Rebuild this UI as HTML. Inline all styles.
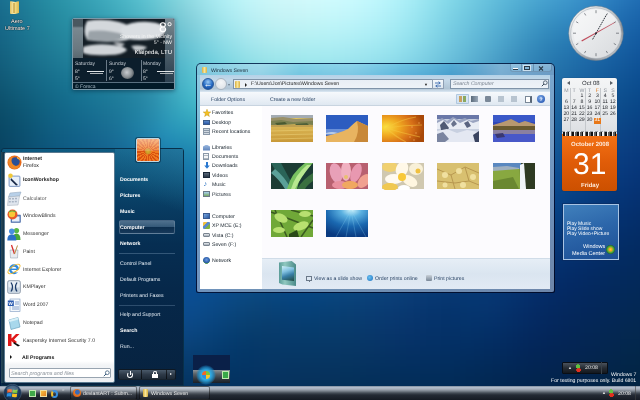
<!DOCTYPE html>
<html><head><meta charset="utf-8">
<style>
*{margin:0;padding:0;box-sizing:border-box}
html,body{width:640px;height:400px;overflow:hidden}
body{text-rendering:geometricPrecision;position:relative;font-family:"Liberation Sans",sans-serif;font-size:6px;background:#0a3a70}
.a{position:absolute}
.t,.sl,.sr,.nv{margin-top:1px}
.t{position:absolute;white-space:nowrap;line-height:1}
.nv{position:absolute;left:212px;color:#15202a;font-size:5.2px;white-space:nowrap;line-height:1}
.ni{position:absolute;left:203px;width:7px;height:6px}
.th{position:absolute;width:42px;height:27px}
.sl{position:absolute;left:23px;color:#1a1a1a;font-size:5.2px;white-space:nowrap;line-height:1}
.si{position:absolute;left:7px;width:14px;height:14px}
.sr{position:absolute;left:120px;color:#fff;font-size:5.2px;white-space:nowrap;line-height:1}
</style></head><body>
<svg class="abs" style="left:0;top:0" width="640" height="400" viewBox="0 0 640 400"><defs><filter id="bgb" x="-10%" y="-10%" width="120%" height="120%" color-interpolation-filters="sRGB"><feGaussianBlur stdDeviation="10"/></filter></defs><g filter="url(#bgb)"><rect x="-40" y="-40" width="20" height="20" fill="#1a6c8e"/><rect x="-20" y="-40" width="20" height="20" fill="#1e7595"/><rect x="0" y="-40" width="20" height="20" fill="#227f9d"/><rect x="20" y="-40" width="20" height="20" fill="#288ba5"/><rect x="40" y="-40" width="20" height="20" fill="#2f97ae"/><rect x="60" y="-40" width="20" height="20" fill="#38a3b7"/><rect x="80" y="-40" width="20" height="20" fill="#42aec0"/><rect x="100" y="-40" width="20" height="20" fill="#4fbaca"/><rect x="120" y="-40" width="20" height="20" fill="#5ec7d5"/><rect x="140" y="-40" width="20" height="20" fill="#70d3de"/><rect x="160" y="-40" width="20" height="20" fill="#85dde6"/><rect x="180" y="-40" width="20" height="20" fill="#9be8ee"/><rect x="200" y="-40" width="20" height="20" fill="#aef1f6"/><rect x="220" y="-40" width="20" height="20" fill="#bef8fb"/><rect x="240" y="-40" width="20" height="20" fill="#cbfcfe"/><rect x="260" y="-40" width="20" height="20" fill="#d4feff"/><rect x="280" y="-40" width="20" height="20" fill="#d9ffff"/><rect x="300" y="-40" width="20" height="20" fill="#dbffff"/><rect x="320" y="-40" width="20" height="20" fill="#d9ffff"/><rect x="340" y="-40" width="20" height="20" fill="#d4ffff"/><rect x="360" y="-40" width="20" height="20" fill="#cbfdff"/><rect x="380" y="-40" width="20" height="20" fill="#c0f9ff"/><rect x="400" y="-40" width="20" height="20" fill="#b1f3fb"/><rect x="420" y="-40" width="20" height="20" fill="#a0ebf6"/><rect x="440" y="-40" width="20" height="20" fill="#8fe1f0"/><rect x="460" y="-40" width="20" height="20" fill="#80d7ea"/><rect x="480" y="-40" width="20" height="20" fill="#72cce6"/><rect x="500" y="-40" width="20" height="20" fill="#66c2e1"/><rect x="520" y="-40" width="20" height="20" fill="#5cb8de"/><rect x="540" y="-40" width="20" height="20" fill="#52aeda"/><rect x="560" y="-40" width="20" height="20" fill="#4aa4d7"/><rect x="580" y="-40" width="20" height="20" fill="#4199d2"/><rect x="600" y="-40" width="20" height="20" fill="#388dcb"/><rect x="620" y="-40" width="20" height="20" fill="#3081c4"/><rect x="640" y="-40" width="20" height="20" fill="#2977be"/><rect x="660" y="-40" width="20" height="20" fill="#236fb8"/><rect x="-40" y="-20" width="20" height="20" fill="#166487"/><rect x="-20" y="-20" width="20" height="20" fill="#196d8f"/><rect x="0" y="-20" width="20" height="20" fill="#1d7896"/><rect x="20" y="-20" width="20" height="20" fill="#22849e"/><rect x="40" y="-20" width="20" height="20" fill="#2991a6"/><rect x="60" y="-20" width="20" height="20" fill="#319baf"/><rect x="80" y="-20" width="20" height="20" fill="#3aa6b9"/><rect x="100" y="-20" width="20" height="20" fill="#45b1c3"/><rect x="120" y="-20" width="20" height="20" fill="#53becd"/><rect x="140" y="-20" width="20" height="20" fill="#66cad7"/><rect x="160" y="-20" width="20" height="20" fill="#7dd5de"/><rect x="180" y="-20" width="20" height="20" fill="#94e0e7"/><rect x="200" y="-20" width="20" height="20" fill="#a8ebf1"/><rect x="220" y="-20" width="20" height="20" fill="#b8f4f8"/><rect x="240" y="-20" width="20" height="20" fill="#c6f8fa"/><rect x="260" y="-20" width="20" height="20" fill="#cff9fb"/><rect x="280" y="-20" width="20" height="20" fill="#d4fafc"/><rect x="300" y="-20" width="20" height="20" fill="#d5fcfe"/><rect x="320" y="-20" width="20" height="20" fill="#d3fcff"/><rect x="340" y="-20" width="20" height="20" fill="#cefcff"/><rect x="360" y="-20" width="20" height="20" fill="#c6fafe"/><rect x="380" y="-20" width="20" height="20" fill="#baf6fc"/><rect x="400" y="-20" width="20" height="20" fill="#abeff7"/><rect x="420" y="-20" width="20" height="20" fill="#99e5f1"/><rect x="440" y="-20" width="20" height="20" fill="#87dbea"/><rect x="460" y="-20" width="20" height="20" fill="#76cfe4"/><rect x="480" y="-20" width="20" height="20" fill="#69c4df"/><rect x="500" y="-20" width="20" height="20" fill="#5db9da"/><rect x="520" y="-20" width="20" height="20" fill="#52aed6"/><rect x="540" y="-20" width="20" height="20" fill="#49a5d3"/><rect x="560" y="-20" width="20" height="20" fill="#419bcf"/><rect x="580" y="-20" width="20" height="20" fill="#3990ca"/><rect x="600" y="-20" width="20" height="20" fill="#2f83c3"/><rect x="620" y="-20" width="20" height="20" fill="#2777bb"/><rect x="640" y="-20" width="20" height="20" fill="#206db4"/><rect x="660" y="-20" width="20" height="20" fill="#1b65af"/><rect x="-40" y="0" width="20" height="20" fill="#135e81"/><rect x="-20" y="0" width="20" height="20" fill="#166688"/><rect x="0" y="0" width="20" height="20" fill="#1a7190"/><rect x="20" y="0" width="20" height="20" fill="#1f7e98"/><rect x="40" y="0" width="20" height="20" fill="#248aa0"/><rect x="60" y="0" width="20" height="20" fill="#2b94a8"/><rect x="80" y="0" width="20" height="20" fill="#339cb1"/><rect x="100" y="0" width="20" height="20" fill="#3da7ba"/><rect x="120" y="0" width="20" height="20" fill="#4ab3c4"/><rect x="140" y="0" width="20" height="20" fill="#5bbfce"/><rect x="160" y="0" width="20" height="20" fill="#74c9d4"/><rect x="180" y="0" width="20" height="20" fill="#8bd4de"/><rect x="200" y="0" width="20" height="20" fill="#9ee3eb"/><rect x="220" y="0" width="20" height="20" fill="#afedf3"/><rect x="240" y="0" width="20" height="20" fill="#bdf2f6"/><rect x="260" y="0" width="20" height="20" fill="#c6f4f6"/><rect x="280" y="0" width="20" height="20" fill="#caf5f7"/><rect x="300" y="0" width="20" height="20" fill="#cbf7f9"/><rect x="320" y="0" width="20" height="20" fill="#c9f8fb"/><rect x="340" y="0" width="20" height="20" fill="#c5f7fc"/><rect x="360" y="0" width="20" height="20" fill="#bdf5fb"/><rect x="380" y="0" width="20" height="20" fill="#b2f1f9"/><rect x="400" y="0" width="20" height="20" fill="#a3eaf4"/><rect x="420" y="0" width="20" height="20" fill="#91e0ee"/><rect x="440" y="0" width="20" height="20" fill="#7ed4e6"/><rect x="460" y="0" width="20" height="20" fill="#6fc8e0"/><rect x="480" y="0" width="20" height="20" fill="#61bcda"/><rect x="500" y="0" width="20" height="20" fill="#53afd3"/><rect x="520" y="0" width="20" height="20" fill="#47a3cd"/><rect x="540" y="0" width="20" height="20" fill="#3e98c9"/><rect x="560" y="0" width="20" height="20" fill="#3790c6"/><rect x="580" y="0" width="20" height="20" fill="#3085c1"/><rect x="600" y="0" width="20" height="20" fill="#2778b9"/><rect x="620" y="0" width="20" height="20" fill="#1f6cb1"/><rect x="640" y="0" width="20" height="20" fill="#1963ab"/><rect x="660" y="0" width="20" height="20" fill="#155ca6"/><rect x="-40" y="20" width="20" height="20" fill="#10597a"/><rect x="-20" y="20" width="20" height="20" fill="#146282"/><rect x="0" y="20" width="20" height="20" fill="#186c8b"/><rect x="20" y="20" width="20" height="20" fill="#1d7893"/><rect x="40" y="20" width="20" height="20" fill="#22839a"/><rect x="60" y="20" width="20" height="20" fill="#278ca2"/><rect x="80" y="20" width="20" height="20" fill="#2d93a9"/><rect x="100" y="20" width="20" height="20" fill="#359cb1"/><rect x="120" y="20" width="20" height="20" fill="#40a6ba"/><rect x="140" y="20" width="20" height="20" fill="#51b1c3"/><rect x="160" y="20" width="20" height="20" fill="#67bccc"/><rect x="180" y="20" width="20" height="20" fill="#7bcad7"/><rect x="200" y="20" width="20" height="20" fill="#8edae5"/><rect x="220" y="20" width="20" height="20" fill="#a1e5ed"/><rect x="240" y="20" width="20" height="20" fill="#b0ebf1"/><rect x="260" y="20" width="20" height="20" fill="#b9eff2"/><rect x="280" y="20" width="20" height="20" fill="#bcf1f4"/><rect x="300" y="20" width="20" height="20" fill="#bcf3f5"/><rect x="320" y="20" width="20" height="20" fill="#bbf3f7"/><rect x="340" y="20" width="20" height="20" fill="#b7f2f7"/><rect x="360" y="20" width="20" height="20" fill="#b1f0f7"/><rect x="380" y="20" width="20" height="20" fill="#a7ecf5"/><rect x="400" y="20" width="20" height="20" fill="#99e5f0"/><rect x="420" y="20" width="20" height="20" fill="#89daea"/><rect x="440" y="20" width="20" height="20" fill="#78cde3"/><rect x="460" y="20" width="20" height="20" fill="#69c0dc"/><rect x="480" y="20" width="20" height="20" fill="#5ab3d5"/><rect x="500" y="20" width="20" height="20" fill="#4ba4cc"/><rect x="520" y="20" width="20" height="20" fill="#3d96c3"/><rect x="540" y="20" width="20" height="20" fill="#328abd"/><rect x="560" y="20" width="20" height="20" fill="#2c81ba"/><rect x="580" y="20" width="20" height="20" fill="#2678b5"/><rect x="600" y="20" width="20" height="20" fill="#1f6daf"/><rect x="620" y="20" width="20" height="20" fill="#1963a8"/><rect x="640" y="20" width="20" height="20" fill="#135aa2"/><rect x="660" y="20" width="20" height="20" fill="#0f549d"/><rect x="-40" y="40" width="20" height="20" fill="#0e5474"/><rect x="-20" y="40" width="20" height="20" fill="#125d7c"/><rect x="0" y="40" width="20" height="20" fill="#166785"/><rect x="20" y="40" width="20" height="20" fill="#1b728e"/><rect x="40" y="40" width="20" height="20" fill="#1f7b95"/><rect x="60" y="40" width="20" height="20" fill="#23839c"/><rect x="80" y="40" width="20" height="20" fill="#278aa2"/><rect x="100" y="40" width="20" height="20" fill="#2d91a8"/><rect x="120" y="40" width="20" height="20" fill="#3699b0"/><rect x="140" y="40" width="20" height="20" fill="#44a5ba"/><rect x="160" y="40" width="20" height="20" fill="#55b3c6"/><rect x="180" y="40" width="20" height="20" fill="#67c4d5"/><rect x="200" y="40" width="20" height="20" fill="#7bd2e0"/><rect x="220" y="40" width="20" height="20" fill="#8edde7"/><rect x="240" y="40" width="20" height="20" fill="#9ee4eb"/><rect x="260" y="40" width="20" height="20" fill="#a6e8ed"/><rect x="280" y="40" width="20" height="20" fill="#a9ebef"/><rect x="300" y="40" width="20" height="20" fill="#aaecf1"/><rect x="320" y="40" width="20" height="20" fill="#aaecf2"/><rect x="340" y="40" width="20" height="20" fill="#a7eaf2"/><rect x="360" y="40" width="20" height="20" fill="#a1e8f1"/><rect x="380" y="40" width="20" height="20" fill="#99e4ef"/><rect x="400" y="40" width="20" height="20" fill="#8ddceb"/><rect x="420" y="40" width="20" height="20" fill="#7ed1e5"/><rect x="440" y="40" width="20" height="20" fill="#6fc4de"/><rect x="460" y="40" width="20" height="20" fill="#61b7d6"/><rect x="480" y="40" width="20" height="20" fill="#52a9ce"/><rect x="500" y="40" width="20" height="20" fill="#4399c4"/><rect x="520" y="40" width="20" height="20" fill="#358abb"/><rect x="540" y="40" width="20" height="20" fill="#2a7eb3"/><rect x="560" y="40" width="20" height="20" fill="#2475af"/><rect x="580" y="40" width="20" height="20" fill="#1f6cab"/><rect x="600" y="40" width="20" height="20" fill="#1964a5"/><rect x="620" y="40" width="20" height="20" fill="#145b9f"/><rect x="640" y="40" width="20" height="20" fill="#0f539a"/><rect x="660" y="40" width="20" height="20" fill="#0b4d95"/><rect x="-40" y="60" width="20" height="20" fill="#0c4f6d"/><rect x="-20" y="60" width="20" height="20" fill="#105775"/><rect x="0" y="60" width="20" height="20" fill="#14617e"/><rect x="20" y="60" width="20" height="20" fill="#176a88"/><rect x="40" y="60" width="20" height="20" fill="#1a738f"/><rect x="60" y="60" width="20" height="20" fill="#1c7a96"/><rect x="80" y="60" width="20" height="20" fill="#20809b"/><rect x="100" y="60" width="20" height="20" fill="#2586a0"/><rect x="120" y="60" width="20" height="20" fill="#2c8da7"/><rect x="140" y="60" width="20" height="20" fill="#3798b1"/><rect x="160" y="60" width="20" height="20" fill="#46abc1"/><rect x="180" y="60" width="20" height="20" fill="#57bfd0"/><rect x="200" y="60" width="20" height="20" fill="#69cddb"/><rect x="220" y="60" width="20" height="20" fill="#7ad5e1"/><rect x="240" y="60" width="20" height="20" fill="#88dbe4"/><rect x="260" y="60" width="20" height="20" fill="#91dfe7"/><rect x="280" y="60" width="20" height="20" fill="#95e2e9"/><rect x="300" y="60" width="20" height="20" fill="#97e3ea"/><rect x="320" y="60" width="20" height="20" fill="#97e2eb"/><rect x="340" y="60" width="20" height="20" fill="#95e0eb"/><rect x="360" y="60" width="20" height="20" fill="#90ddea"/><rect x="380" y="60" width="20" height="20" fill="#89d8e8"/><rect x="400" y="60" width="20" height="20" fill="#7fd0e4"/><rect x="420" y="60" width="20" height="20" fill="#73c6de"/><rect x="440" y="60" width="20" height="20" fill="#65bad7"/><rect x="460" y="60" width="20" height="20" fill="#57accf"/><rect x="480" y="60" width="20" height="20" fill="#4a9ec6"/><rect x="500" y="60" width="20" height="20" fill="#3c8fbd"/><rect x="520" y="60" width="20" height="20" fill="#2f81b4"/><rect x="540" y="60" width="20" height="20" fill="#2675ac"/><rect x="560" y="60" width="20" height="20" fill="#1f6ca7"/><rect x="580" y="60" width="20" height="20" fill="#1a63a2"/><rect x="600" y="60" width="20" height="20" fill="#155c9d"/><rect x="620" y="60" width="20" height="20" fill="#105497"/><rect x="640" y="60" width="20" height="20" fill="#0b4d92"/><rect x="660" y="60" width="20" height="20" fill="#08478d"/><rect x="-40" y="80" width="20" height="20" fill="#0a4966"/><rect x="-20" y="80" width="20" height="20" fill="#0d516d"/><rect x="0" y="80" width="20" height="20" fill="#105976"/><rect x="20" y="80" width="20" height="20" fill="#126280"/><rect x="40" y="80" width="20" height="20" fill="#146a89"/><rect x="60" y="80" width="20" height="20" fill="#167190"/><rect x="80" y="80" width="20" height="20" fill="#197896"/><rect x="100" y="80" width="20" height="20" fill="#1e7d9a"/><rect x="120" y="80" width="20" height="20" fill="#24829f"/><rect x="140" y="80" width="20" height="20" fill="#2c8ca9"/><rect x="160" y="80" width="20" height="20" fill="#3aa4bc"/><rect x="180" y="80" width="20" height="20" fill="#4abbcd"/><rect x="200" y="80" width="20" height="20" fill="#57c5d4"/><rect x="220" y="80" width="20" height="20" fill="#65cbd8"/><rect x="240" y="80" width="20" height="20" fill="#72cfdc"/><rect x="260" y="80" width="20" height="20" fill="#7ad3de"/><rect x="280" y="80" width="20" height="20" fill="#80d5e0"/><rect x="300" y="80" width="20" height="20" fill="#83d6e2"/><rect x="320" y="80" width="20" height="20" fill="#84d5e2"/><rect x="340" y="80" width="20" height="20" fill="#82d3e2"/><rect x="360" y="80" width="20" height="20" fill="#7fcfe1"/><rect x="380" y="80" width="20" height="20" fill="#79cadf"/><rect x="400" y="80" width="20" height="20" fill="#70c2db"/><rect x="420" y="80" width="20" height="20" fill="#66b9d5"/><rect x="440" y="80" width="20" height="20" fill="#5aadcf"/><rect x="460" y="80" width="20" height="20" fill="#4ea1c7"/><rect x="480" y="80" width="20" height="20" fill="#4193bf"/><rect x="500" y="80" width="20" height="20" fill="#3586b6"/><rect x="520" y="80" width="20" height="20" fill="#2b79ad"/><rect x="540" y="80" width="20" height="20" fill="#226ea6"/><rect x="560" y="80" width="20" height="20" fill="#1c649f"/><rect x="580" y="80" width="20" height="20" fill="#165c9a"/><rect x="600" y="80" width="20" height="20" fill="#115594"/><rect x="620" y="80" width="20" height="20" fill="#0c4e8f"/><rect x="640" y="80" width="20" height="20" fill="#08488a"/><rect x="660" y="80" width="20" height="20" fill="#064286"/><rect x="-40" y="100" width="20" height="20" fill="#08445f"/><rect x="-20" y="100" width="20" height="20" fill="#0a4a66"/><rect x="0" y="100" width="20" height="20" fill="#0c516e"/><rect x="20" y="100" width="20" height="20" fill="#0e5a78"/><rect x="40" y="100" width="20" height="20" fill="#106383"/><rect x="60" y="100" width="20" height="20" fill="#13698b"/><rect x="80" y="100" width="20" height="20" fill="#176f91"/><rect x="100" y="100" width="20" height="20" fill="#1b7596"/><rect x="120" y="100" width="20" height="20" fill="#1f7e9e"/><rect x="140" y="100" width="20" height="20" fill="#2789a9"/><rect x="160" y="100" width="20" height="20" fill="#319eb9"/><rect x="180" y="100" width="20" height="20" fill="#3aafc3"/><rect x="200" y="100" width="20" height="20" fill="#45b7c9"/><rect x="220" y="100" width="20" height="20" fill="#51bccd"/><rect x="240" y="100" width="20" height="20" fill="#5cc0d1"/><rect x="260" y="100" width="20" height="20" fill="#65c3d4"/><rect x="280" y="100" width="20" height="20" fill="#6bc6d7"/><rect x="300" y="100" width="20" height="20" fill="#6fc7d8"/><rect x="320" y="100" width="20" height="20" fill="#71c6d9"/><rect x="340" y="100" width="20" height="20" fill="#70c4d9"/><rect x="360" y="100" width="20" height="20" fill="#6dc0d8"/><rect x="380" y="100" width="20" height="20" fill="#68bbd5"/><rect x="400" y="100" width="20" height="20" fill="#61b4d1"/><rect x="420" y="100" width="20" height="20" fill="#58abcc"/><rect x="440" y="100" width="20" height="20" fill="#4ea0c6"/><rect x="460" y="100" width="20" height="20" fill="#4395bf"/><rect x="480" y="100" width="20" height="20" fill="#3988b8"/><rect x="500" y="100" width="20" height="20" fill="#2f7cb0"/><rect x="520" y="100" width="20" height="20" fill="#2671a8"/><rect x="540" y="100" width="20" height="20" fill="#1e66a0"/><rect x="560" y="100" width="20" height="20" fill="#185d9a"/><rect x="580" y="100" width="20" height="20" fill="#135594"/><rect x="600" y="100" width="20" height="20" fill="#0e4e8e"/><rect x="620" y="100" width="20" height="20" fill="#0a4888"/><rect x="640" y="100" width="20" height="20" fill="#074284"/><rect x="660" y="100" width="20" height="20" fill="#053d80"/><rect x="-40" y="120" width="20" height="20" fill="#063f5a"/><rect x="-20" y="120" width="20" height="20" fill="#084561"/><rect x="0" y="120" width="20" height="20" fill="#0a4b69"/><rect x="20" y="120" width="20" height="20" fill="#0c5474"/><rect x="40" y="120" width="20" height="20" fill="#0f5d80"/><rect x="60" y="120" width="20" height="20" fill="#116287"/><rect x="80" y="120" width="20" height="20" fill="#15678d"/><rect x="100" y="120" width="20" height="20" fill="#196d93"/><rect x="120" y="120" width="20" height="20" fill="#1c799e"/><rect x="140" y="120" width="20" height="20" fill="#2286ad"/><rect x="160" y="120" width="20" height="20" fill="#2896bb"/><rect x="180" y="120" width="20" height="20" fill="#2b9bb9"/><rect x="200" y="120" width="20" height="20" fill="#34a3bd"/><rect x="220" y="120" width="20" height="20" fill="#3ea9c2"/><rect x="240" y="120" width="20" height="20" fill="#49aec6"/><rect x="260" y="120" width="20" height="20" fill="#51b2ca"/><rect x="280" y="120" width="20" height="20" fill="#58b5cd"/><rect x="300" y="120" width="20" height="20" fill="#5cb6ce"/><rect x="320" y="120" width="20" height="20" fill="#5eb5cf"/><rect x="340" y="120" width="20" height="20" fill="#5eb3cf"/><rect x="360" y="120" width="20" height="20" fill="#5cb0cd"/><rect x="380" y="120" width="20" height="20" fill="#58abcb"/><rect x="400" y="120" width="20" height="20" fill="#52a4c7"/><rect x="420" y="120" width="20" height="20" fill="#4b9cc3"/><rect x="440" y="120" width="20" height="20" fill="#4293bd"/><rect x="460" y="120" width="20" height="20" fill="#3988b7"/><rect x="480" y="120" width="20" height="20" fill="#307eb0"/><rect x="500" y="120" width="20" height="20" fill="#2873a9"/><rect x="520" y="120" width="20" height="20" fill="#2069a2"/><rect x="540" y="120" width="20" height="20" fill="#1a5f9b"/><rect x="560" y="120" width="20" height="20" fill="#145795"/><rect x="580" y="120" width="20" height="20" fill="#104f8f"/><rect x="600" y="120" width="20" height="20" fill="#0d4889"/><rect x="620" y="120" width="20" height="20" fill="#0a4284"/><rect x="640" y="120" width="20" height="20" fill="#073d7f"/><rect x="660" y="120" width="20" height="20" fill="#04387b"/><rect x="-40" y="140" width="20" height="20" fill="#053a57"/><rect x="-20" y="140" width="20" height="20" fill="#07415e"/><rect x="0" y="140" width="20" height="20" fill="#094767"/><rect x="20" y="140" width="20" height="20" fill="#0b4f72"/><rect x="40" y="140" width="20" height="20" fill="#0d567c"/><rect x="60" y="140" width="20" height="20" fill="#0f5b84"/><rect x="80" y="140" width="20" height="20" fill="#125f8a"/><rect x="100" y="140" width="20" height="20" fill="#156591"/><rect x="120" y="140" width="20" height="20" fill="#186e9c"/><rect x="140" y="140" width="20" height="20" fill="#1b7aa9"/><rect x="160" y="140" width="20" height="20" fill="#1d83b1"/><rect x="180" y="140" width="20" height="20" fill="#1f87b0"/><rect x="200" y="140" width="20" height="20" fill="#268eb3"/><rect x="220" y="140" width="20" height="20" fill="#2f95b7"/><rect x="240" y="140" width="20" height="20" fill="#389bbc"/><rect x="260" y="140" width="20" height="20" fill="#40a0c0"/><rect x="280" y="140" width="20" height="20" fill="#46a3c2"/><rect x="300" y="140" width="20" height="20" fill="#4aa4c4"/><rect x="320" y="140" width="20" height="20" fill="#4da4c5"/><rect x="340" y="140" width="20" height="20" fill="#4da2c4"/><rect x="360" y="140" width="20" height="20" fill="#4c9fc3"/><rect x="380" y="140" width="20" height="20" fill="#499bc0"/><rect x="400" y="140" width="20" height="20" fill="#4495bd"/><rect x="420" y="140" width="20" height="20" fill="#3e8db9"/><rect x="440" y="140" width="20" height="20" fill="#3785b4"/><rect x="460" y="140" width="20" height="20" fill="#307caf"/><rect x="480" y="140" width="20" height="20" fill="#2873a9"/><rect x="500" y="140" width="20" height="20" fill="#2169a3"/><rect x="520" y="140" width="20" height="20" fill="#1a609d"/><rect x="540" y="140" width="20" height="20" fill="#145897"/><rect x="560" y="140" width="20" height="20" fill="#105091"/><rect x="580" y="140" width="20" height="20" fill="#0d498b"/><rect x="600" y="140" width="20" height="20" fill="#0b4285"/><rect x="620" y="140" width="20" height="20" fill="#0a3d80"/><rect x="640" y="140" width="20" height="20" fill="#07387b"/><rect x="660" y="140" width="20" height="20" fill="#043477"/><rect x="-40" y="160" width="20" height="20" fill="#033655"/><rect x="-20" y="160" width="20" height="20" fill="#053c5c"/><rect x="0" y="160" width="20" height="20" fill="#074365"/><rect x="20" y="160" width="20" height="20" fill="#094a6f"/><rect x="40" y="160" width="20" height="20" fill="#0b5079"/><rect x="60" y="160" width="20" height="20" fill="#0d5481"/><rect x="80" y="160" width="20" height="20" fill="#0f5988"/><rect x="100" y="160" width="20" height="20" fill="#115e90"/><rect x="120" y="160" width="20" height="20" fill="#136599"/><rect x="140" y="160" width="20" height="20" fill="#146ca2"/><rect x="160" y="160" width="20" height="20" fill="#1572a7"/><rect x="180" y="160" width="20" height="20" fill="#1776a8"/><rect x="200" y="160" width="20" height="20" fill="#1c7cab"/><rect x="220" y="160" width="20" height="20" fill="#2383af"/><rect x="240" y="160" width="20" height="20" fill="#2b89b3"/><rect x="260" y="160" width="20" height="20" fill="#318eb6"/><rect x="280" y="160" width="20" height="20" fill="#3791b8"/><rect x="300" y="160" width="20" height="20" fill="#3b93ba"/><rect x="320" y="160" width="20" height="20" fill="#3d93ba"/><rect x="340" y="160" width="20" height="20" fill="#3e92ba"/><rect x="360" y="160" width="20" height="20" fill="#3d8fb8"/><rect x="380" y="160" width="20" height="20" fill="#3b8bb6"/><rect x="400" y="160" width="20" height="20" fill="#3885b3"/><rect x="420" y="160" width="20" height="20" fill="#337faf"/><rect x="440" y="160" width="20" height="20" fill="#2d78ab"/><rect x="460" y="160" width="20" height="20" fill="#2670a6"/><rect x="480" y="160" width="20" height="20" fill="#2068a1"/><rect x="500" y="160" width="20" height="20" fill="#1a609c"/><rect x="520" y="160" width="20" height="20" fill="#145897"/><rect x="540" y="160" width="20" height="20" fill="#0f5092"/><rect x="560" y="160" width="20" height="20" fill="#0c498c"/><rect x="580" y="160" width="20" height="20" fill="#0a4386"/><rect x="600" y="160" width="20" height="20" fill="#093d81"/><rect x="620" y="160" width="20" height="20" fill="#08387c"/><rect x="640" y="160" width="20" height="20" fill="#063477"/><rect x="660" y="160" width="20" height="20" fill="#043072"/><rect x="-40" y="180" width="20" height="20" fill="#023353"/><rect x="-20" y="180" width="20" height="20" fill="#04385b"/><rect x="0" y="180" width="20" height="20" fill="#063f64"/><rect x="20" y="180" width="20" height="20" fill="#08446d"/><rect x="40" y="180" width="20" height="20" fill="#094a76"/><rect x="60" y="180" width="20" height="20" fill="#0b4e7e"/><rect x="80" y="180" width="20" height="20" fill="#0d5286"/><rect x="100" y="180" width="20" height="20" fill="#0e578e"/><rect x="120" y="180" width="20" height="20" fill="#0f5c95"/><rect x="140" y="180" width="20" height="20" fill="#0f619c"/><rect x="160" y="180" width="20" height="20" fill="#1065a0"/><rect x="180" y="180" width="20" height="20" fill="#1268a3"/><rect x="200" y="180" width="20" height="20" fill="#156ea5"/><rect x="220" y="180" width="20" height="20" fill="#1a74a8"/><rect x="240" y="180" width="20" height="20" fill="#2079ab"/><rect x="260" y="180" width="20" height="20" fill="#257ead"/><rect x="280" y="180" width="20" height="20" fill="#2a81af"/><rect x="300" y="180" width="20" height="20" fill="#2d82b0"/><rect x="320" y="180" width="20" height="20" fill="#3082b0"/><rect x="340" y="180" width="20" height="20" fill="#3181af"/><rect x="360" y="180" width="20" height="20" fill="#307fae"/><rect x="380" y="180" width="20" height="20" fill="#2f7bab"/><rect x="400" y="180" width="20" height="20" fill="#2c76a8"/><rect x="420" y="180" width="20" height="20" fill="#2871a5"/><rect x="440" y="180" width="20" height="20" fill="#236ba1"/><rect x="460" y="180" width="20" height="20" fill="#1e649d"/><rect x="480" y="180" width="20" height="20" fill="#195d99"/><rect x="500" y="180" width="20" height="20" fill="#145695"/><rect x="520" y="180" width="20" height="20" fill="#0f5091"/><rect x="540" y="180" width="20" height="20" fill="#0a498d"/><rect x="560" y="180" width="20" height="20" fill="#084387"/><rect x="580" y="180" width="20" height="20" fill="#073e81"/><rect x="600" y="180" width="20" height="20" fill="#07397b"/><rect x="620" y="180" width="20" height="20" fill="#063476"/><rect x="640" y="180" width="20" height="20" fill="#053171"/><rect x="660" y="180" width="20" height="20" fill="#032e6d"/><rect x="-40" y="200" width="20" height="20" fill="#002f51"/><rect x="-20" y="200" width="20" height="20" fill="#023559"/><rect x="0" y="200" width="20" height="20" fill="#043a62"/><rect x="20" y="200" width="20" height="20" fill="#06406b"/><rect x="40" y="200" width="20" height="20" fill="#084574"/><rect x="60" y="200" width="20" height="20" fill="#09497c"/><rect x="80" y="200" width="20" height="20" fill="#0a4d84"/><rect x="100" y="200" width="20" height="20" fill="#0b518c"/><rect x="120" y="200" width="20" height="20" fill="#0c5593"/><rect x="140" y="200" width="20" height="20" fill="#0c5898"/><rect x="160" y="200" width="20" height="20" fill="#0c5b9b"/><rect x="180" y="200" width="20" height="20" fill="#0e5e9d"/><rect x="200" y="200" width="20" height="20" fill="#10629f"/><rect x="220" y="200" width="20" height="20" fill="#1467a1"/><rect x="240" y="200" width="20" height="20" fill="#186ca3"/><rect x="260" y="200" width="20" height="20" fill="#1c6fa5"/><rect x="280" y="200" width="20" height="20" fill="#1f72a6"/><rect x="300" y="200" width="20" height="20" fill="#2273a7"/><rect x="320" y="200" width="20" height="20" fill="#2473a7"/><rect x="340" y="200" width="20" height="20" fill="#2572a5"/><rect x="360" y="200" width="20" height="20" fill="#2570a3"/><rect x="380" y="200" width="20" height="20" fill="#246ca1"/><rect x="400" y="200" width="20" height="20" fill="#22689e"/><rect x="420" y="200" width="20" height="20" fill="#1f639b"/><rect x="440" y="200" width="20" height="20" fill="#1b5e97"/><rect x="460" y="200" width="20" height="20" fill="#175994"/><rect x="480" y="200" width="20" height="20" fill="#135391"/><rect x="500" y="200" width="20" height="20" fill="#0f4d8e"/><rect x="520" y="200" width="20" height="20" fill="#0b488a"/><rect x="540" y="200" width="20" height="20" fill="#074286"/><rect x="560" y="200" width="20" height="20" fill="#053d80"/><rect x="580" y="200" width="20" height="20" fill="#05387b"/><rect x="600" y="200" width="20" height="20" fill="#053475"/><rect x="620" y="200" width="20" height="20" fill="#053170"/><rect x="640" y="200" width="20" height="20" fill="#042e6b"/><rect x="660" y="200" width="20" height="20" fill="#032b67"/><rect x="-40" y="220" width="20" height="20" fill="#002b50"/><rect x="-20" y="220" width="20" height="20" fill="#013158"/><rect x="0" y="220" width="20" height="20" fill="#033660"/><rect x="20" y="220" width="20" height="20" fill="#053b69"/><rect x="40" y="220" width="20" height="20" fill="#064072"/><rect x="60" y="220" width="20" height="20" fill="#07457b"/><rect x="80" y="220" width="20" height="20" fill="#084983"/><rect x="100" y="220" width="20" height="20" fill="#094c8a"/><rect x="120" y="220" width="20" height="20" fill="#094f90"/><rect x="140" y="220" width="20" height="20" fill="#0a5295"/><rect x="160" y="220" width="20" height="20" fill="#0a5498"/><rect x="180" y="220" width="20" height="20" fill="#0b5699"/><rect x="200" y="220" width="20" height="20" fill="#0d5a9a"/><rect x="220" y="220" width="20" height="20" fill="#0f5d9c"/><rect x="240" y="220" width="20" height="20" fill="#12609c"/><rect x="260" y="220" width="20" height="20" fill="#14639d"/><rect x="280" y="220" width="20" height="20" fill="#16649e"/><rect x="300" y="220" width="20" height="20" fill="#18659e"/><rect x="320" y="220" width="20" height="20" fill="#1a659d"/><rect x="340" y="220" width="20" height="20" fill="#1b649b"/><rect x="360" y="220" width="20" height="20" fill="#1c6299"/><rect x="380" y="220" width="20" height="20" fill="#1b5f96"/><rect x="400" y="220" width="20" height="20" fill="#195b93"/><rect x="420" y="220" width="20" height="20" fill="#175790"/><rect x="440" y="220" width="20" height="20" fill="#14538e"/><rect x="460" y="220" width="20" height="20" fill="#114e8b"/><rect x="480" y="220" width="20" height="20" fill="#0e4a89"/><rect x="500" y="220" width="20" height="20" fill="#0b4586"/><rect x="520" y="220" width="20" height="20" fill="#084082"/><rect x="540" y="220" width="20" height="20" fill="#063b7d"/><rect x="560" y="220" width="20" height="20" fill="#043778"/><rect x="580" y="220" width="20" height="20" fill="#043373"/><rect x="600" y="220" width="20" height="20" fill="#04316e"/><rect x="620" y="220" width="20" height="20" fill="#042e69"/><rect x="640" y="220" width="20" height="20" fill="#032c65"/><rect x="660" y="220" width="20" height="20" fill="#022962"/><rect x="-40" y="240" width="20" height="20" fill="#00284e"/><rect x="-20" y="240" width="20" height="20" fill="#002d56"/><rect x="0" y="240" width="20" height="20" fill="#02335e"/><rect x="20" y="240" width="20" height="20" fill="#033867"/><rect x="40" y="240" width="20" height="20" fill="#053c70"/><rect x="60" y="240" width="20" height="20" fill="#064179"/><rect x="80" y="240" width="20" height="20" fill="#074581"/><rect x="100" y="240" width="20" height="20" fill="#084988"/><rect x="120" y="240" width="20" height="20" fill="#084c8f"/><rect x="140" y="240" width="20" height="20" fill="#084e94"/><rect x="160" y="240" width="20" height="20" fill="#095097"/><rect x="180" y="240" width="20" height="20" fill="#095297"/><rect x="200" y="240" width="20" height="20" fill="#0a5497"/><rect x="220" y="240" width="20" height="20" fill="#0c5696"/><rect x="240" y="240" width="20" height="20" fill="#0e5796"/><rect x="260" y="240" width="20" height="20" fill="#0f5895"/><rect x="280" y="240" width="20" height="20" fill="#105996"/><rect x="300" y="240" width="20" height="20" fill="#115995"/><rect x="320" y="240" width="20" height="20" fill="#125994"/><rect x="340" y="240" width="20" height="20" fill="#145892"/><rect x="360" y="240" width="20" height="20" fill="#14568f"/><rect x="380" y="240" width="20" height="20" fill="#14538c"/><rect x="400" y="240" width="20" height="20" fill="#124f89"/><rect x="420" y="240" width="20" height="20" fill="#114c86"/><rect x="440" y="240" width="20" height="20" fill="#0e4884"/><rect x="460" y="240" width="20" height="20" fill="#0c4582"/><rect x="480" y="240" width="20" height="20" fill="#0a4281"/><rect x="500" y="240" width="20" height="20" fill="#083e7e"/><rect x="520" y="240" width="20" height="20" fill="#06397a"/><rect x="540" y="240" width="20" height="20" fill="#053575"/><rect x="560" y="240" width="20" height="20" fill="#043170"/><rect x="580" y="240" width="20" height="20" fill="#042f6c"/><rect x="600" y="240" width="20" height="20" fill="#032d67"/><rect x="620" y="240" width="20" height="20" fill="#032c63"/><rect x="640" y="240" width="20" height="20" fill="#032a60"/><rect x="660" y="240" width="20" height="20" fill="#02285d"/><rect x="-40" y="260" width="20" height="20" fill="#00254c"/><rect x="-20" y="260" width="20" height="20" fill="#002a54"/><rect x="0" y="260" width="20" height="20" fill="#012f5c"/><rect x="20" y="260" width="20" height="20" fill="#023465"/><rect x="40" y="260" width="20" height="20" fill="#04396e"/><rect x="60" y="260" width="20" height="20" fill="#053d76"/><rect x="80" y="260" width="20" height="20" fill="#06427e"/><rect x="100" y="260" width="20" height="20" fill="#074686"/><rect x="120" y="260" width="20" height="20" fill="#08498d"/><rect x="140" y="260" width="20" height="20" fill="#084c93"/><rect x="160" y="260" width="20" height="20" fill="#094f97"/><rect x="180" y="260" width="20" height="20" fill="#095098"/><rect x="200" y="260" width="20" height="20" fill="#0a5195"/><rect x="220" y="260" width="20" height="20" fill="#0b5091"/><rect x="240" y="260" width="20" height="20" fill="#0b508e"/><rect x="260" y="260" width="20" height="20" fill="#0b508d"/><rect x="280" y="260" width="20" height="20" fill="#0a4f8d"/><rect x="300" y="260" width="20" height="20" fill="#0b4f8d"/><rect x="320" y="260" width="20" height="20" fill="#0c4f8a"/><rect x="340" y="260" width="20" height="20" fill="#0e4e88"/><rect x="360" y="260" width="20" height="20" fill="#0f4c85"/><rect x="380" y="260" width="20" height="20" fill="#0f4983"/><rect x="400" y="260" width="20" height="20" fill="#0d4580"/><rect x="420" y="260" width="20" height="20" fill="#0c427d"/><rect x="440" y="260" width="20" height="20" fill="#0a3f7b"/><rect x="460" y="260" width="20" height="20" fill="#093e7a"/><rect x="480" y="260" width="20" height="20" fill="#083c7a"/><rect x="500" y="260" width="20" height="20" fill="#073877"/><rect x="520" y="260" width="20" height="20" fill="#063472"/><rect x="540" y="260" width="20" height="20" fill="#052f6d"/><rect x="560" y="260" width="20" height="20" fill="#042d69"/><rect x="580" y="260" width="20" height="20" fill="#042b65"/><rect x="600" y="260" width="20" height="20" fill="#032b61"/><rect x="620" y="260" width="20" height="20" fill="#032a5e"/><rect x="640" y="260" width="20" height="20" fill="#02295b"/><rect x="660" y="260" width="20" height="20" fill="#022758"/><rect x="-40" y="280" width="20" height="20" fill="#002249"/><rect x="-20" y="280" width="20" height="20" fill="#002751"/><rect x="0" y="280" width="20" height="20" fill="#002c59"/><rect x="20" y="280" width="20" height="20" fill="#013162"/><rect x="40" y="280" width="20" height="20" fill="#03366a"/><rect x="60" y="280" width="20" height="20" fill="#053a73"/><rect x="80" y="280" width="20" height="20" fill="#063f7b"/><rect x="100" y="280" width="20" height="20" fill="#074383"/><rect x="120" y="280" width="20" height="20" fill="#08478a"/><rect x="140" y="280" width="20" height="20" fill="#094b90"/><rect x="160" y="280" width="20" height="20" fill="#0a4d95"/><rect x="180" y="280" width="20" height="20" fill="#0a4f95"/><rect x="200" y="280" width="20" height="20" fill="#0a4d90"/><rect x="220" y="280" width="20" height="20" fill="#0b4b88"/><rect x="240" y="280" width="20" height="20" fill="#0b4a83"/><rect x="260" y="280" width="20" height="20" fill="#094882"/><rect x="280" y="280" width="20" height="20" fill="#074784"/><rect x="300" y="280" width="20" height="20" fill="#074783"/><rect x="320" y="280" width="20" height="20" fill="#094681"/><rect x="340" y="280" width="20" height="20" fill="#0a457e"/><rect x="360" y="280" width="20" height="20" fill="#0b437c"/><rect x="380" y="280" width="20" height="20" fill="#0b417a"/><rect x="400" y="280" width="20" height="20" fill="#0a3d78"/><rect x="420" y="280" width="20" height="20" fill="#083a75"/><rect x="440" y="280" width="20" height="20" fill="#073873"/><rect x="460" y="280" width="20" height="20" fill="#063874"/><rect x="480" y="280" width="20" height="20" fill="#063774"/><rect x="500" y="280" width="20" height="20" fill="#063471"/><rect x="520" y="280" width="20" height="20" fill="#052f6c"/><rect x="540" y="280" width="20" height="20" fill="#052b67"/><rect x="560" y="280" width="20" height="20" fill="#042963"/><rect x="580" y="280" width="20" height="20" fill="#04295f"/><rect x="600" y="280" width="20" height="20" fill="#04295c"/><rect x="620" y="280" width="20" height="20" fill="#032959"/><rect x="640" y="280" width="20" height="20" fill="#032857"/><rect x="660" y="280" width="20" height="20" fill="#022654"/><rect x="-40" y="300" width="20" height="20" fill="#001e46"/><rect x="-20" y="300" width="20" height="20" fill="#00234e"/><rect x="0" y="300" width="20" height="20" fill="#002856"/><rect x="20" y="300" width="20" height="20" fill="#002d5e"/><rect x="40" y="300" width="20" height="20" fill="#023266"/><rect x="60" y="300" width="20" height="20" fill="#04376e"/><rect x="80" y="300" width="20" height="20" fill="#053c76"/><rect x="100" y="300" width="20" height="20" fill="#07407e"/><rect x="120" y="300" width="20" height="20" fill="#084484"/><rect x="140" y="300" width="20" height="20" fill="#0a488a"/><rect x="160" y="300" width="20" height="20" fill="#0b4b8e"/><rect x="180" y="300" width="20" height="20" fill="#0b4c8d"/><rect x="200" y="300" width="20" height="20" fill="#0a4987"/><rect x="220" y="300" width="20" height="20" fill="#0a467e"/><rect x="240" y="300" width="20" height="20" fill="#0a4477"/><rect x="260" y="300" width="20" height="20" fill="#094276"/><rect x="280" y="300" width="20" height="20" fill="#064178"/><rect x="300" y="300" width="20" height="20" fill="#064078"/><rect x="320" y="300" width="20" height="20" fill="#074075"/><rect x="340" y="300" width="20" height="20" fill="#093f74"/><rect x="360" y="300" width="20" height="20" fill="#093d74"/><rect x="380" y="300" width="20" height="20" fill="#093b73"/><rect x="400" y="300" width="20" height="20" fill="#083871"/><rect x="420" y="300" width="20" height="20" fill="#06356e"/><rect x="440" y="300" width="20" height="20" fill="#05346d"/><rect x="460" y="300" width="20" height="20" fill="#05356f"/><rect x="480" y="300" width="20" height="20" fill="#06356f"/><rect x="500" y="300" width="20" height="20" fill="#05306b"/><rect x="520" y="300" width="20" height="20" fill="#052c66"/><rect x="540" y="300" width="20" height="20" fill="#042961"/><rect x="560" y="300" width="20" height="20" fill="#04285d"/><rect x="580" y="300" width="20" height="20" fill="#04275a"/><rect x="600" y="300" width="20" height="20" fill="#042858"/><rect x="620" y="300" width="20" height="20" fill="#032855"/><rect x="640" y="300" width="20" height="20" fill="#032752"/><rect x="660" y="300" width="20" height="20" fill="#022650"/><rect x="-40" y="320" width="20" height="20" fill="#001b42"/><rect x="-20" y="320" width="20" height="20" fill="#00204a"/><rect x="0" y="320" width="20" height="20" fill="#002552"/><rect x="20" y="320" width="20" height="20" fill="#002a59"/><rect x="40" y="320" width="20" height="20" fill="#012f61"/><rect x="60" y="320" width="20" height="20" fill="#033369"/><rect x="80" y="320" width="20" height="20" fill="#053870"/><rect x="100" y="320" width="20" height="20" fill="#063c77"/><rect x="120" y="320" width="20" height="20" fill="#08407d"/><rect x="140" y="320" width="20" height="20" fill="#094481"/><rect x="160" y="320" width="20" height="20" fill="#0b4784"/><rect x="180" y="320" width="20" height="20" fill="#0b4783"/><rect x="200" y="320" width="20" height="20" fill="#09437c"/><rect x="220" y="320" width="20" height="20" fill="#063f73"/><rect x="240" y="320" width="20" height="20" fill="#073d6d"/><rect x="260" y="320" width="20" height="20" fill="#083c6c"/><rect x="280" y="320" width="20" height="20" fill="#073c6e"/><rect x="300" y="320" width="20" height="20" fill="#063c6d"/><rect x="320" y="320" width="20" height="20" fill="#073b6c"/><rect x="340" y="320" width="20" height="20" fill="#083a6b"/><rect x="360" y="320" width="20" height="20" fill="#08386c"/><rect x="380" y="320" width="20" height="20" fill="#08366c"/><rect x="400" y="320" width="20" height="20" fill="#07346b"/><rect x="420" y="320" width="20" height="20" fill="#053269"/><rect x="440" y="320" width="20" height="20" fill="#043168"/><rect x="460" y="320" width="20" height="20" fill="#043269"/><rect x="480" y="320" width="20" height="20" fill="#043068"/><rect x="500" y="320" width="20" height="20" fill="#042d64"/><rect x="520" y="320" width="20" height="20" fill="#042960"/><rect x="540" y="320" width="20" height="20" fill="#04275c"/><rect x="560" y="320" width="20" height="20" fill="#042658"/><rect x="580" y="320" width="20" height="20" fill="#042756"/><rect x="600" y="320" width="20" height="20" fill="#042753"/><rect x="620" y="320" width="20" height="20" fill="#042851"/><rect x="640" y="320" width="20" height="20" fill="#03274e"/><rect x="660" y="320" width="20" height="20" fill="#02254b"/><rect x="-40" y="340" width="20" height="20" fill="#00183e"/><rect x="-20" y="340" width="20" height="20" fill="#001d45"/><rect x="0" y="340" width="20" height="20" fill="#00224d"/><rect x="20" y="340" width="20" height="20" fill="#002654"/><rect x="40" y="340" width="20" height="20" fill="#002b5b"/><rect x="60" y="340" width="20" height="20" fill="#023062"/><rect x="80" y="340" width="20" height="20" fill="#043469"/><rect x="100" y="340" width="20" height="20" fill="#05386e"/><rect x="120" y="340" width="20" height="20" fill="#073c73"/><rect x="140" y="340" width="20" height="20" fill="#083e76"/><rect x="160" y="340" width="20" height="20" fill="#094077"/><rect x="180" y="340" width="20" height="20" fill="#084075"/><rect x="200" y="340" width="20" height="20" fill="#063d71"/><rect x="220" y="340" width="20" height="20" fill="#03396c"/><rect x="240" y="340" width="20" height="20" fill="#043768"/><rect x="260" y="340" width="20" height="20" fill="#063867"/><rect x="280" y="340" width="20" height="20" fill="#063867"/><rect x="300" y="340" width="20" height="20" fill="#063866"/><rect x="320" y="340" width="20" height="20" fill="#073765"/><rect x="340" y="340" width="20" height="20" fill="#073664"/><rect x="360" y="340" width="20" height="20" fill="#073565"/><rect x="380" y="340" width="20" height="20" fill="#063365"/><rect x="400" y="340" width="20" height="20" fill="#053165"/><rect x="420" y="340" width="20" height="20" fill="#043064"/><rect x="440" y="340" width="20" height="20" fill="#032f63"/><rect x="460" y="340" width="20" height="20" fill="#032e62"/><rect x="480" y="340" width="20" height="20" fill="#032c60"/><rect x="500" y="340" width="20" height="20" fill="#03295d"/><rect x="520" y="340" width="20" height="20" fill="#032659"/><rect x="540" y="340" width="20" height="20" fill="#032556"/><rect x="560" y="340" width="20" height="20" fill="#042553"/><rect x="580" y="340" width="20" height="20" fill="#042551"/><rect x="600" y="340" width="20" height="20" fill="#04264f"/><rect x="620" y="340" width="20" height="20" fill="#03274c"/><rect x="640" y="340" width="20" height="20" fill="#02264a"/><rect x="660" y="340" width="20" height="20" fill="#012447"/><rect x="-40" y="360" width="20" height="20" fill="#001439"/><rect x="-20" y="360" width="20" height="20" fill="#001940"/><rect x="0" y="360" width="20" height="20" fill="#001e47"/><rect x="20" y="360" width="20" height="20" fill="#00224e"/><rect x="40" y="360" width="20" height="20" fill="#002755"/><rect x="60" y="360" width="20" height="20" fill="#012b5b"/><rect x="80" y="360" width="20" height="20" fill="#032f61"/><rect x="100" y="360" width="20" height="20" fill="#043365"/><rect x="120" y="360" width="20" height="20" fill="#053669"/><rect x="140" y="360" width="20" height="20" fill="#06386b"/><rect x="160" y="360" width="20" height="20" fill="#07396b"/><rect x="180" y="360" width="20" height="20" fill="#063969"/><rect x="200" y="360" width="20" height="20" fill="#043767"/><rect x="220" y="360" width="20" height="20" fill="#033565"/><rect x="240" y="360" width="20" height="20" fill="#043464"/><rect x="260" y="360" width="20" height="20" fill="#063563"/><rect x="280" y="360" width="20" height="20" fill="#063461"/><rect x="300" y="360" width="20" height="20" fill="#063460"/><rect x="320" y="360" width="20" height="20" fill="#06335f"/><rect x="340" y="360" width="20" height="20" fill="#05335e"/><rect x="360" y="360" width="20" height="20" fill="#05315e"/><rect x="380" y="360" width="20" height="20" fill="#04305e"/><rect x="400" y="360" width="20" height="20" fill="#032f5e"/><rect x="420" y="360" width="20" height="20" fill="#032e5d"/><rect x="440" y="360" width="20" height="20" fill="#022d5c"/><rect x="460" y="360" width="20" height="20" fill="#022b5a"/><rect x="480" y="360" width="20" height="20" fill="#022a58"/><rect x="500" y="360" width="20" height="20" fill="#022755"/><rect x="520" y="360" width="20" height="20" fill="#022553"/><rect x="540" y="360" width="20" height="20" fill="#032450"/><rect x="560" y="360" width="20" height="20" fill="#03244e"/><rect x="580" y="360" width="20" height="20" fill="#03244b"/><rect x="600" y="360" width="20" height="20" fill="#032549"/><rect x="620" y="360" width="20" height="20" fill="#022547"/><rect x="640" y="360" width="20" height="20" fill="#022445"/><rect x="660" y="360" width="20" height="20" fill="#002342"/><rect x="-40" y="380" width="20" height="20" fill="#001134"/><rect x="-20" y="380" width="20" height="20" fill="#00153b"/><rect x="0" y="380" width="20" height="20" fill="#001a41"/><rect x="20" y="380" width="20" height="20" fill="#001e48"/><rect x="40" y="380" width="20" height="20" fill="#00234e"/><rect x="60" y="380" width="20" height="20" fill="#002753"/><rect x="80" y="380" width="20" height="20" fill="#012a58"/><rect x="100" y="380" width="20" height="20" fill="#032e5c"/><rect x="120" y="380" width="20" height="20" fill="#04305f"/><rect x="140" y="380" width="20" height="20" fill="#043260"/><rect x="160" y="380" width="20" height="20" fill="#053360"/><rect x="180" y="380" width="20" height="20" fill="#043360"/><rect x="200" y="380" width="20" height="20" fill="#04325f"/><rect x="220" y="380" width="20" height="20" fill="#04315e"/><rect x="240" y="380" width="20" height="20" fill="#04315e"/><rect x="260" y="380" width="20" height="20" fill="#05315d"/><rect x="280" y="380" width="20" height="20" fill="#05315c"/><rect x="300" y="380" width="20" height="20" fill="#05305a"/><rect x="320" y="380" width="20" height="20" fill="#053059"/><rect x="340" y="380" width="20" height="20" fill="#042f58"/><rect x="360" y="380" width="20" height="20" fill="#032e58"/><rect x="380" y="380" width="20" height="20" fill="#032d57"/><rect x="400" y="380" width="20" height="20" fill="#022c57"/><rect x="420" y="380" width="20" height="20" fill="#012b56"/><rect x="440" y="380" width="20" height="20" fill="#012a55"/><rect x="460" y="380" width="20" height="20" fill="#012953"/><rect x="480" y="380" width="20" height="20" fill="#012751"/><rect x="500" y="380" width="20" height="20" fill="#01254f"/><rect x="520" y="380" width="20" height="20" fill="#01244c"/><rect x="540" y="380" width="20" height="20" fill="#01234a"/><rect x="560" y="380" width="20" height="20" fill="#022248"/><rect x="580" y="380" width="20" height="20" fill="#022246"/><rect x="600" y="380" width="20" height="20" fill="#022344"/><rect x="620" y="380" width="20" height="20" fill="#012342"/><rect x="640" y="380" width="20" height="20" fill="#002240"/><rect x="660" y="380" width="20" height="20" fill="#00213d"/><rect x="-40" y="400" width="20" height="20" fill="#000d2f"/><rect x="-20" y="400" width="20" height="20" fill="#001235"/><rect x="0" y="400" width="20" height="20" fill="#00163b"/><rect x="20" y="400" width="20" height="20" fill="#001a41"/><rect x="40" y="400" width="20" height="20" fill="#001e46"/><rect x="60" y="400" width="20" height="20" fill="#00224b"/><rect x="80" y="400" width="20" height="20" fill="#002550"/><rect x="100" y="400" width="20" height="20" fill="#012853"/><rect x="120" y="400" width="20" height="20" fill="#022b56"/><rect x="140" y="400" width="20" height="20" fill="#032c57"/><rect x="160" y="400" width="20" height="20" fill="#032d57"/><rect x="180" y="400" width="20" height="20" fill="#032e57"/><rect x="200" y="400" width="20" height="20" fill="#032d57"/><rect x="220" y="400" width="20" height="20" fill="#032d57"/><rect x="240" y="400" width="20" height="20" fill="#042d57"/><rect x="260" y="400" width="20" height="20" fill="#042d56"/><rect x="280" y="400" width="20" height="20" fill="#042d55"/><rect x="300" y="400" width="20" height="20" fill="#042d54"/><rect x="320" y="400" width="20" height="20" fill="#042c53"/><rect x="340" y="400" width="20" height="20" fill="#032c52"/><rect x="360" y="400" width="20" height="20" fill="#022b51"/><rect x="380" y="400" width="20" height="20" fill="#012a50"/><rect x="400" y="400" width="20" height="20" fill="#012950"/><rect x="420" y="400" width="20" height="20" fill="#00284f"/><rect x="440" y="400" width="20" height="20" fill="#00274e"/><rect x="460" y="400" width="20" height="20" fill="#00264c"/><rect x="480" y="400" width="20" height="20" fill="#00254a"/><rect x="500" y="400" width="20" height="20" fill="#002348"/><rect x="520" y="400" width="20" height="20" fill="#002246"/><rect x="540" y="400" width="20" height="20" fill="#002144"/><rect x="560" y="400" width="20" height="20" fill="#002142"/><rect x="580" y="400" width="20" height="20" fill="#002140"/><rect x="600" y="400" width="20" height="20" fill="#00203e"/><rect x="620" y="400" width="20" height="20" fill="#00203c"/><rect x="640" y="400" width="20" height="20" fill="#001f3a"/><rect x="660" y="400" width="20" height="20" fill="#001e38"/><rect x="-40" y="420" width="20" height="20" fill="#000929"/><rect x="-20" y="420" width="20" height="20" fill="#000e2f"/><rect x="0" y="420" width="20" height="20" fill="#001235"/><rect x="20" y="420" width="20" height="20" fill="#00163a"/><rect x="40" y="420" width="20" height="20" fill="#001a3f"/><rect x="60" y="420" width="20" height="20" fill="#001d43"/><rect x="80" y="420" width="20" height="20" fill="#002047"/><rect x="100" y="420" width="20" height="20" fill="#00234a"/><rect x="120" y="420" width="20" height="20" fill="#00254d"/><rect x="140" y="420" width="20" height="20" fill="#01274e"/><rect x="160" y="420" width="20" height="20" fill="#01284f"/><rect x="180" y="420" width="20" height="20" fill="#02294f"/><rect x="200" y="420" width="20" height="20" fill="#02294f"/><rect x="220" y="420" width="20" height="20" fill="#022950"/><rect x="240" y="420" width="20" height="20" fill="#032950"/><rect x="260" y="420" width="20" height="20" fill="#03294f"/><rect x="280" y="420" width="20" height="20" fill="#03294e"/><rect x="300" y="420" width="20" height="20" fill="#03294d"/><rect x="320" y="420" width="20" height="20" fill="#02294c"/><rect x="340" y="420" width="20" height="20" fill="#02284b"/><rect x="360" y="420" width="20" height="20" fill="#01284b"/><rect x="380" y="420" width="20" height="20" fill="#00274a"/><rect x="400" y="420" width="20" height="20" fill="#002649"/><rect x="420" y="420" width="20" height="20" fill="#002648"/><rect x="440" y="420" width="20" height="20" fill="#002547"/><rect x="460" y="420" width="20" height="20" fill="#002445"/><rect x="480" y="420" width="20" height="20" fill="#002244"/><rect x="500" y="420" width="20" height="20" fill="#002142"/><rect x="520" y="420" width="20" height="20" fill="#002040"/><rect x="540" y="420" width="20" height="20" fill="#001f3e"/><rect x="560" y="420" width="20" height="20" fill="#001f3c"/><rect x="580" y="420" width="20" height="20" fill="#001e3a"/><rect x="600" y="420" width="20" height="20" fill="#001e39"/><rect x="620" y="420" width="20" height="20" fill="#001d37"/><rect x="640" y="420" width="20" height="20" fill="#001d35"/><rect x="660" y="420" width="20" height="20" fill="#001b32"/></g></svg>

<!-- ============ desktop icon ============ -->
<div class="a" style="left:10px;top:1px;width:9px;height:13px;background:linear-gradient(90deg,#e0c060,#f8e8a8 40%,#f0d880 60%,#d8b850);border-radius:1px;clip-path:polygon(0 0,60% 8%,100% 0,100% 92%,60% 100%,0 100%)"></div>
<div class="a" style="left:13px;top:3px;width:2px;height:10px;background:rgba(190,150,50,.6)"></div>
<div class="t" style="left:11px;top:19px;color:#fff;font-size:5.5px;text-shadow:0 0 1px #000,0 0 1px #000">Aero</div>
<div class="t" style="left:5px;top:26px;color:#fff;font-size:5.5px;text-shadow:0 0 1px #000,0 0 1px #000">Ultimate 7</div>

<!-- ============ weather gadget ============ -->
<div class="a" style="left:72px;top:18px;width:103px;height:72px;background:#0c1e2c;border:1px solid #7a98a8;border-radius:2px;overflow:hidden;box-shadow:0 1px 4px rgba(0,20,40,.45)">
  <svg class="a" style="left:0;top:0" width="101" height="39" viewBox="0 0 101 39">
   <defs><filter id="wb" x="-20%" y="-20%" width="140%" height="140%" color-interpolation-filters="sRGB"><feGaussianBlur stdDeviation=".9"/></filter></defs>
   <rect width="101" height="39" fill="#141e26"/>
   <g filter="url(#wb)">
    <path d="M14 2 Q30 -1 46 3 Q58 6 62 14 Q60 21 48 22 Q30 24 14 21 Q9 12 14 2Z" fill="#d4d8dc"/>
    <path d="M16 12 Q34 10 52 16 Q50 21 40 22 Q24 23 14 20Z" fill="#9aa2a8"/>
    <path d="M48 8 Q60 2 76 3 Q90 4 94 10 Q92 18 80 20 Q66 22 54 20 Q46 16 48 8Z" fill="#dadee2"/>
    <path d="M10 28 Q22 24 40 26 Q52 27 54 31 Q50 36 36 36 Q18 37 10 34Z" fill="#d0d4d8"/>
    <path d="M58 27 Q66 25 74 28 Q72 32 62 32Z" fill="#c4c8cc"/>
    <path d="M40 24 Q46 22 52 25 L48 28Z" fill="#b8bcc0"/>
   </g>
  </svg>
  <div class="a" style="left:0;top:0;width:10px;height:39px;background:linear-gradient(180deg,#4a5860 0,#4a5860 7px,#7a8890 9px,#6a7880 30px,#5a6870 39px)"></div>
  <div class="a" style="left:92px;top:0;width:9px;height:63px;background:linear-gradient(180deg,#7a8890 0,#5a6a74 35%,#2a3e4e 100%)"></div>
  <div class="t" style="left:86px;top:0px;color:#fff;font-size:14px">8°</div>
  <div class="t" style="right:2px;top:15px;color:#f4f4f4;font-size:5.2px">Showers in the Vicinity</div>
  <div class="t" style="right:2px;top:21px;color:#f4f4f4;font-size:5.2px">5° - NW</div>
  <div class="t" style="right:2px;top:29.5px;color:#fff;font-size:6px">Klaipeda, LTU</div>
  <div class="a" style="left:33px;top:41px;width:1px;height:21px;background:#6a7a88"></div>
  <div class="a" style="left:68px;top:41px;width:1px;height:21px;background:#6a7a88"></div>
  <div class="t" style="left:2px;top:42px;color:#c0c8d0;font-size:5px">Saturday</div>
  <div class="t" style="left:36px;top:42px;color:#c0c8d0;font-size:5px">Sunday</div>
  <div class="t" style="left:70px;top:42px;color:#c0c8d0;font-size:5px">Monday</div>
  <div class="t" style="left:2px;top:49.5px;color:#d8dde0;font-size:5px">8°</div>
  <div class="t" style="left:2px;top:56.5px;color:#d8dde0;font-size:5px">5°</div>
  <div class="t" style="left:36px;top:49.5px;color:#d8dde0;font-size:5px">9°</div>
  <div class="t" style="left:36px;top:56.5px;color:#d8dde0;font-size:5px">6°</div>
  <div class="t" style="left:70px;top:49.5px;color:#d8dde0;font-size:5px">8°</div>
  <div class="t" style="left:70px;top:56.5px;color:#d8dde0;font-size:5px">5°</div>
  <div class="a" style="left:14px;top:51.5px;width:17px;height:1.5px;background:#e0e4e6"></div>
  <div class="a" style="left:17px;top:53.5px;width:13px;height:1px;background:#b0b6ba"></div>
  <div class="a" style="left:48px;top:48px;width:13px;height:12px;border-radius:50%;background:radial-gradient(circle at 45% 45%,#c8ccd0,#8a9094 50%,#4a5258 80%,rgba(0,0,0,0) 100%)"></div>
  <div class="a" style="left:84px;top:51.5px;width:17px;height:1.5px;background:#e0e4e6"></div>
  <div class="a" style="left:87px;top:53.5px;width:13px;height:1px;background:#b0b6ba"></div>
  <div class="a" style="left:0;top:63px;width:101px;height:1px;background:#5a7080"></div>
  <div class="a" style="left:0;top:64px;width:101px;height:6px;background:#021a28"></div>
  <div class="t" style="left:2px;top:65px;color:#a8b8c4;font-size:5px">© Foreca</div>
</div>

<!-- ============ explorer window ============ -->
<div class="a" style="left:196px;top:63px;width:359px;height:230px;border:1px solid rgba(10,40,80,.85);border-radius:5px 5px 2px 2px;background:linear-gradient(180deg,rgb(205,232,250),rgb(185,220,245) 14px,rgb(160,190,220) 100%);mix-blend-mode:multiply"></div>
<div class="a" style="left:197px;top:75px;width:357px;height:217px;border-radius:0 0 2px 2px;background:linear-gradient(180deg,rgba(215,235,250,.5),rgba(215,235,250,.5))"></div>
<div class="a" style="left:197px;top:64px;width:357px;height:11px;border-radius:4px 4px 0 0;background:linear-gradient(90deg,rgba(255,255,255,.3) 0,rgba(255,255,255,.3) 64px,rgba(255,255,255,.05) 104px,rgba(255,255,255,.12) 154px,rgba(255,255,255,0) 204px,rgba(255,255,255,0) 254px,rgba(255,255,255,.2) 284px,rgba(255,255,255,.35) 304px,rgba(255,255,255,.35) 357px)"></div>
<div class="a" style="left:202px;top:67px;width:5px;height:6px;background:linear-gradient(90deg,#d8b040,#f8e498 50%,#d8b040);border-radius:1px"></div>
<div class="t" style="left:211px;top:67.5px;color:#1a2a38;font-size:5.2px">Windows Seven</div>
<!-- caption buttons -->
<div class="a" style="left:510px;top:64px;width:42px;height:8px;border:1px solid rgba(60,90,120,.35);border-top:none;border-radius:0 0 3px 3px;background:linear-gradient(180deg,rgba(190,225,245,.35),rgba(150,200,230,.35))"></div>
<div class="a" style="left:521px;top:64px;width:1px;height:7px;background:rgba(60,90,120,.4)"></div>
<div class="a" style="left:533px;top:64px;width:1px;height:7px;background:rgba(60,90,120,.4)"></div>
<div class="a" style="left:513px;top:68px;width:5px;height:2px;background:#2a3a48;border-top:1px solid #fff"></div>
<div class="a" style="left:524px;top:66px;width:6px;height:4px;border:1px solid #2a3a48;box-shadow:0 0 0 1px rgba(255,255,255,.6)"></div>
<svg class="a" style="left:538px;top:65.5px" width="6" height="5" viewBox="0 0 6 5"><path d="M1 .5 L5 4.5 M5 .5 L1 4.5" stroke="#2a3a48" stroke-width="1.1"/></svg>
<!-- nav bar -->
<div class="a" style="left:200px;top:75px;width:350px;height:17px;background:linear-gradient(180deg,#b4d2e8,#c4d8e8 30%,#b0c4d4 80%,#dce8f4)"></div>
<div class="a" style="left:202px;top:78px;width:12px;height:12px;border-radius:50%;background:radial-gradient(circle at 50% 30%,#9ccaf4,#2a70c8 50%,#0c3a8a);border:1px solid #2a5a9a"></div>
<div class="t" style="left:203.5px;top:79px;color:#fff;font-size:9px;font-weight:bold">←</div>
<div class="a" style="left:215px;top:78px;width:12px;height:12px;border-radius:50%;background:radial-gradient(circle at 50% 35%,#f4f6f8,#d8dee4);border:1px solid #a8b4c0"></div>
<div class="a" style="left:228px;top:84px;width:0;height:0;border-left:1.5px solid transparent;border-right:1.5px solid transparent;border-top:2px solid #6a7888"></div>
<div class="a" style="left:233px;top:78.5px;width:211px;height:10px;background:linear-gradient(180deg,#e8eef5,#eef3f8);border:1px solid #7f93a8"></div>
<div class="a" style="left:235px;top:80.5px;width:5px;height:7px;background:linear-gradient(90deg,#d8b040,#f8e498 50%,#d8b040);border-radius:1px"></div>
<div class="a" style="left:245px;top:82.5px;width:0;height:0;border-top:2px solid transparent;border-bottom:2px solid transparent;border-left:2.5px solid #222"></div>
<div class="t" style="left:251px;top:81px;color:#1a1a1a;font-size:5.2px">F:\Users\Jon\Pictures\Windows Seven</div>
<div class="t" style="left:424px;top:82px;color:#222;font-size:4px">▼</div>
<div class="a" style="left:432px;top:79px;width:12px;height:10px;background:linear-gradient(180deg,#f4f8fb,#dce6ef);border:1px solid #8f9fb3"></div>
<svg class="a" style="left:434px;top:80.5px" width="8" height="7" viewBox="0 0 8 7"><path d="M1 2 L6 2 M4.5 .7 L6.3 2 L4.5 3.3 M7 5 L2 5 M3.5 3.7 L1.7 5 L3.5 6.3" stroke="#3a6ab0" stroke-width=".9" fill="none"/></svg>
<div class="a" style="left:450px;top:78.5px;width:99px;height:10px;background:linear-gradient(180deg,#e8eef5,#eef3f8);border:1px solid #7f93a8"></div>
<div class="t" style="left:453px;top:81px;color:#7a8490;font-size:5.2px;font-style:italic">Search Computer</div>
<svg class="a" style="left:541px;top:80px" width="7" height="7" viewBox="0 0 7 7"><circle cx="4.3" cy="2.7" r="1.9" fill="none" stroke="#3a4a5a" stroke-width=".8"/><path d="M3 4 L.8 6.2" stroke="#3a4a5a" stroke-width="1"/></svg>
<!-- command bar -->
<div class="a" style="left:200px;top:92px;width:350px;height:14px;background:linear-gradient(180deg,#f6f9fc,#e9eff6 60%,#dfe8f1);border-bottom:1px solid #c8d4e0"></div>
<div class="t" style="left:211px;top:96.5px;color:#1e395b;font-size:5.2px">Folder Options</div>
<div class="t" style="left:270px;top:96.5px;color:#1e395b;font-size:5.2px">Create a new folder</div>
<div class="a" style="left:456px;top:94px;width:13px;height:10px;background:rgba(200,220,240,.6);border:1px solid rgba(150,180,210,.6);border-radius:1px"></div>
<div class="a" style="left:459px;top:96px;width:7px;height:6px;background:linear-gradient(90deg,#c8a060 0,#c8a060 3px,transparent 3px,transparent 4px,#8aa860 4px)"></div>
<div class="a" style="left:471px;top:96px;width:7px;height:6px;background:linear-gradient(90deg,#5a6a7a,#9aa8b8)"></div>
<div class="a" style="left:485px;top:96px;width:6px;height:6px;background:#7a8898;border-radius:1px"></div>
<div class="a" style="left:498px;top:96px;width:6px;height:6px;background:#b8c4d0"></div>
<div class="a" style="left:511px;top:96px;width:6px;height:6px;background:#b8c4d0"></div>
<div class="a" style="left:525px;top:95.5px;width:7px;height:7px;background:#fff;border:1px solid #7a8898;border-right:2px solid #5a6878"></div>
<div class="a" style="left:537px;top:95px;width:8px;height:8px;border-radius:50%;background:radial-gradient(circle at 40% 35%,#7aa8e8,#1a4aa8)"></div>
<div class="t" style="left:539.5px;top:96.5px;color:#fff;font-size:5px;font-weight:bold">?</div>
<!-- panes -->
<div class="a" style="left:200px;top:106px;width:62px;height:183px;background:#fff"></div>
<div class="a" style="left:262px;top:106px;width:288px;height:152px;background:#fcfbfe"></div>
<div class="a" style="left:262px;top:258px;width:288px;height:31px;background:linear-gradient(180deg,#e6eef6,#dae5f0 50%,#e2eaf4);border-top:1px solid #d0dce8"></div>

<!-- nav pane -->
<svg class="a" style="left:203px;top:109px" width="8" height="8" viewBox="0 0 10 10"><path d="M5 .3 L6.3 3.6 L9.8 3.7 L7 5.9 L8 9.4 L5 7.4 L2 9.4 L3 5.9 L.2 3.7 L3.7 3.6Z" fill="#f4c020" stroke="#b88810" stroke-width=".5"/></svg>
<div class="nv" style="top:110px">Favorites</div>
<div class="ni" style="top:119.5px;height:5px;background:linear-gradient(180deg,#5a88c8,#2a58a8);border:1px solid #3a5a88"></div>
<div class="nv" style="top:119.5px">Desktop</div>
<div class="ni" style="top:127.5px;width:7px;height:7px;background:repeating-linear-gradient(180deg,#d0d8e0 0,#d0d8e0 1px,#8a98a8 1px,#8a98a8 2px);border:1px solid #8a98a8"></div>
<div class="nv" style="top:128.5px">Recent locations</div>
<div class="ni" style="top:144.5px;width:7px;height:6px;background:linear-gradient(180deg,#9ab8e0,#5a80b8);clip-path:polygon(50% 0,100% 35%,100% 100%,0 100%,0 35%)"></div>
<div class="nv" style="top:144.5px">Libraries</div>
<div class="ni" style="top:153px;width:6px;height:7px;background:repeating-linear-gradient(180deg,#f4f6f8 0,#f4f6f8 1px,#b0b8c0 1px,#b0b8c0 1.5px);border:1px solid #8a98a8"></div>
<div class="nv" style="top:154px">Documents</div>
<svg class="a" style="left:204px;top:162px" width="6" height="7" viewBox="0 0 6 7"><path d="M2 0 L4 0 L4 3.5 L5.8 3.5 L3 6.8 L.2 3.5 L2 3.5Z" fill="#2a78d0"/></svg>
<div class="nv" style="top:163px">Downloads</div>
<div class="ni" style="top:171.5px;width:7px;height:6px;background:linear-gradient(180deg,#5a6878,#2a3848);border:1px solid #1a2838"></div>
<div class="nv" style="top:172.5px">Videos</div>
<div class="t" style="left:203.5px;top:180px;color:#2a70c0;font-size:7px">♪</div>
<div class="nv" style="top:181.5px">Music</div>
<div class="ni" style="top:190.5px;width:7px;height:6px;background:linear-gradient(180deg,#a8d0f0,#78a860);border:1px solid #6a7a88"></div>
<div class="nv" style="top:191.5px">Pictures</div>
<div class="ni" style="top:212.5px;width:7px;height:6px;background:linear-gradient(135deg,#7aa8e0,#2a58a0);border:1px solid #3a5a90"></div>
<div class="nv" style="top:213.5px">Computer</div>
<div class="ni" style="top:222px;width:7px;height:7px;background:linear-gradient(135deg,#f0c040 0,#f0c040 30%,#5a8ac8 30%,#5a8ac8 60%,#80b040 60%);border-radius:1px"></div>
<div class="nv" style="top:223px">XP MCE (E:)</div>
<div class="ni" style="top:232.5px;height:4px;background:linear-gradient(180deg,#e8ecf0,#a0aab4);border:1px solid #7a8490;border-radius:1px"></div>
<div class="nv" style="top:232.5px">Vista (C:)</div>
<div class="ni" style="top:241.5px;height:4px;background:linear-gradient(180deg,#e8ecf0,#a0aab4);border:1px solid #7a8490;border-radius:1px"></div>
<div class="nv" style="top:241.5px">Seven (F:)</div>
<div class="ni" style="top:257px;width:7px;height:7px;border-radius:50%;background:radial-gradient(circle at 50% 40%,#6a9ae0,#2a5aa8 55%,#5aa050 70%,rgba(0,0,0,0) 75%)"></div>
<div class="nv" style="top:258px">Network</div>
<!-- thumbs -->
<svg class="a" style="left:262px;top:106px" width="288" height="152" viewBox="0 0 288 152">
<defs>
 <clipPath id="tc"><rect width="42" height="27"/></clipPath>
 <filter id="tb" x="0" y="0" width="1" height="1" color-interpolation-filters="sRGB"><feGaussianBlur stdDeviation=".6"/></filter>
 <linearGradient id="wh" x1="0" y1="0" x2="0" y2="1"><stop offset="0" stop-color="#e8cc68"/><stop offset="1" stop-color="#c89838"/></linearGradient>
 <radialGradient id="gb" cx=".1" cy=".45" r=".9"><stop offset="0" stop-color="#fae040"/><stop offset=".35" stop-color="#f0a820"/><stop offset=".7" stop-color="#d87018"/><stop offset="1" stop-color="#a84808"/></radialGradient>
 <radialGradient id="uw" cx=".6" cy="0" r="1"><stop offset="0" stop-color="#d0f4fc"/><stop offset=".25" stop-color="#5ab0e0"/><stop offset=".6" stop-color="#1a68b0"/><stop offset="1" stop-color="#0a3a80"/></radialGradient>
</defs>
<!-- 1 wheat -->
<g transform="translate(9,9)" clip-path="url(#tc)"><g filter="url(#tb)">
 <rect width="42" height="27" fill="url(#wh)"/>
 <rect width="42" height="3" fill="#a4acb4"/>
 <path d="M0 3 L12 2 L25 4 L42 3 L42 8 L0 9Z" fill="#9a9068"/>
 <path d="M0 6 L10 5 L22 7 L42 6 L42 10 L28 9 L12 10 L0 10Z" fill="#7a8050"/>
 <path d="M4 8 L14 7 L16 9 L6 10Z" fill="#4a5a30"/><path d="M24 9 L36 8 L38 10 L26 11Z" fill="#506038"/>
 <path d="M0 10 L42 10 L42 12 L0 12Z" fill="#c0a050"/>
 <path d="M0 16 L42 15 M0 20 L42 19 M0 24 L42 23" stroke="#f0d880" stroke-width=".8" opacity=".6"/>
</g></g>
<!-- 2 desert -->
<g transform="translate(64,9)" clip-path="url(#tc)"><g filter="url(#tb)">
 <rect width="42" height="27" fill="#2c5cc0"/>
 <rect y="14" width="42" height="6" fill="#6a90d8"/>
 <path d="M0 18 Q6 16 12 18 L8 19 L0 19Z" fill="#b8cce8"/>
 <path d="M0 21 Q14 18 22 14 Q28 8 31 6 L42 11 L42 27 L0 27Z" fill="#e8b460"/>
 <path d="M31 6 L42 11 L42 27 L28 27 Q34 18 31 6Z" fill="#c88838"/>
</g></g>
<!-- 3 gerbera -->
<g transform="translate(120,9)" clip-path="url(#tc)"><g filter="url(#tb)">
 <rect width="42" height="27" fill="url(#gb)"/>
 <path d="M4 13 Q20 4 34 2 M4 13 Q22 10 40 10 M4 13 Q20 18 38 22 M4 13 Q14 22 24 27" stroke="#f8c840" stroke-width="1.2" fill="none" opacity=".5"/>
 <g fill="#f8b060" opacity=".7"><circle cx="30" cy="12" r=".8"/><circle cx="34" cy="18" r=".8"/><circle cx="28" cy="22" r=".8"/><circle cx="37" cy="8" r=".8"/><circle cx="32" cy="25" r=".8"/></g>
</g></g>
<!-- 4 mountains -->
<g transform="translate(175,9)" clip-path="url(#tc)"><g filter="url(#tb)">
 <rect width="42" height="27" fill="#c8d0e0"/>
 <rect width="42" height="4" fill="#6a78a8"/>
 <path d="M0 6 L5 3 L10 6 L16 2 L22 5 L28 3 L34 6 L42 4 L42 10 L0 10Z" fill="#9aa4c0"/>
 <path d="M0 8 L6 5 L11 9 L17 4 L23 8 L30 5 L36 8 L42 6 L42 14 L0 14Z" fill="#e8ecf4"/>
 <path d="M3 10 L7 6 L12 13 L9 17 L4 15Z" fill="#505a74"/>
 <path d="M17 5 L20 9 L16 12 L14 9Z" fill="#68728c"/>
 <path d="M27 8 L31 6 L34 11 L30 13Z" fill="#5a6480"/>
 <path d="M0 16 L10 14 L20 18 L30 15 L42 17 L42 27 L0 27Z" fill="#e4e8f2"/>
 <path d="M0 19 L6 17 L12 24 L8 27 L0 27Z" fill="#7a84a0"/>
 <path d="M36 20 L42 16 L42 27 L38 27Z" fill="#3a4460"/>
</g></g>
<!-- 5 lake -->
<g transform="translate(231,9)" clip-path="url(#tc)"><g filter="url(#tb)">
 <rect width="42" height="27" fill="#3048b8"/>
 <rect width="42" height="7" fill="#3a58c8"/>
 <path d="M0 10 L10 7 L18 4 L26 8 L32 6 L42 9 L42 13 L0 13Z" fill="#b89870"/>
 <path d="M0 11 L42 11 L42 15 L0 15Z" fill="#6a5a30"/>
 <path d="M0 15 L42 15 L42 19 L0 19Z" fill="#8a80a0"/>
 <path d="M0 19 L42 19 L42 27 L0 27Z" fill="#4858c8"/>
 <path d="M2 19 L10 18 L12 22 L4 23Z" fill="#3a3870"/>
</g></g>
<!-- 6 agave -->
<g transform="translate(9,57)" clip-path="url(#tc)"><g filter="url(#tb)">
 <rect width="42" height="26" fill="#1c3c34"/>
 <path d="M0 0 L10 0 L24 26 L16 26Z" fill="#2a6458"/>
 <path d="M4 6 Q14 14 20 26 L14 26 Q8 16 0 10Z" fill="#5aa098"/>
 <path d="M16 26 Q20 10 34 0 L42 0 Q28 12 26 26Z" fill="#78c060"/>
 <path d="M20 26 Q24 12 36 2 L40 2 Q30 14 24 26Z" fill="#b8e890"/>
 <path d="M26 26 Q32 16 42 10 L42 18 Q36 22 34 26Z" fill="#3a7040"/>
</g></g>
<!-- 7 pink flower -->
<g transform="translate(64,57)" clip-path="url(#tc)"><g filter="url(#tb)">
 <rect width="42" height="26" fill="#b86070"/>
 <ellipse cx="10" cy="10" rx="6" ry="10" fill="#e8a0b8" transform="rotate(-15 10 10)"/>
 <ellipse cx="20" cy="8" rx="5" ry="10" fill="#f0b0c0"/>
 <ellipse cx="30" cy="10" rx="5" ry="10" fill="#e898b0" transform="rotate(20 30 10)"/>
 <ellipse cx="38" cy="18" rx="5" ry="8" fill="#f0a090" transform="rotate(40 38 18)"/>
 <ellipse cx="14" cy="22" rx="8" ry="4" fill="#e890a0"/>
 <ellipse cx="24" cy="22" rx="8" ry="4" fill="#f0a860"/>
 <circle cx="20" cy="14" r="2" fill="#e8c070"/>
</g></g>
<!-- 8 frangipani -->
<g transform="translate(120,57)" clip-path="url(#tc)"><g filter="url(#tb)">
 <rect width="42" height="26" fill="#d0c8b0"/>
 <ellipse cx="8" cy="4" rx="8" ry="5" fill="#f0d070"/>
 <ellipse cx="20" cy="6" rx="6" ry="8" fill="#fff8e8" transform="rotate(20 20 6)"/>
 <ellipse cx="12" cy="16" rx="9" ry="5" fill="#fffaf0"/>
 <ellipse cx="28" cy="18" rx="8" ry="5" fill="#fff6e0" transform="rotate(30 28 18)"/>
 <ellipse cx="34" cy="6" rx="7" ry="6" fill="#f8f0d8"/>
 <circle cx="20" cy="14" r="4" fill="#f8c838"/>
 <circle cx="36" cy="8" r="2.5" fill="#f0c040"/>
 <ellipse cx="8" cy="24" rx="8" ry="4" fill="#f0c850"/>
 <ellipse cx="22" cy="25" rx="6" ry="3" fill="#ffffff"/>
</g></g>
<!-- 9 golden texture -->
<g transform="translate(175,57)" clip-path="url(#tc)"><g filter="url(#tb)">
 <rect width="42" height="26" fill="#d8c070"/>
 <path d="M0 6 L14 12 L28 4 L42 10 M14 12 L18 26 M28 4 L32 18 L42 22 M0 18 L18 20 L32 18" stroke="#b89850" stroke-width="1" fill="none"/>
 <g fill="#f0e0a0"><circle cx="8" cy="12" r="3"/><circle cx="22" cy="8" r="3"/><circle cx="36" cy="14" r="3"/><circle cx="26" cy="22" r="3"/><circle cx="8" cy="22" r="2.5"/></g>
</g></g>
<!-- 10 waterfall -->
<g transform="translate(231,57)" clip-path="url(#tc)"><g filter="url(#tb)">
 <rect width="42" height="26" fill="#7a9838"/>
 <rect width="42" height="6" fill="#5a88c0"/>
 <path d="M0 4 L14 3 L26 5 L26 8 L0 8Z" fill="#a0b0c0"/>
 <path d="M0 8 L26 6 L28 26 L0 26Z" fill="#88a840"/>
 <path d="M0 18 L20 14 L26 26 L0 26Z" fill="#6a8830"/>
 <path d="M28 0 L42 0 L42 26 L32 26Z" fill="#2e3a22"/>
 <path d="M27 2 L31 0 L33 26 L27 26Z" fill="#f0f4f8"/>
</g></g>
<!-- 11 fern -->
<g transform="translate(9,104)" clip-path="url(#tc)"><g filter="url(#tb)">
 <rect width="42" height="27" fill="#70a838"/>
 <path d="M0 2 L42 18 M4 0 L16 27 M20 0 L42 6 M30 27 L42 10" stroke="#3a5a20" stroke-width="1.5"/>
 <g fill="#b8e070"><ellipse cx="10" cy="8" rx="7" ry="4" transform="rotate(25 10 8)"/><ellipse cx="30" cy="16" rx="8" ry="4" transform="rotate(-20 30 16)"/><ellipse cx="8" cy="20" rx="6" ry="3"/><ellipse cx="34" cy="4" rx="6" ry="3"/></g>
 <path d="M18 24 L26 20 L28 27 L18 27Z" fill="#2a4a18"/>
</g></g>
<!-- 12 underwater -->
<g transform="translate(64,104)" clip-path="url(#tc)"><g filter="url(#tb)">
 <rect width="42" height="27" fill="url(#uw)"/>
 <path d="M25 0 L10 27 M25 0 L20 27 M25 0 L30 27 M25 0 L40 27" stroke="#8ad0f0" stroke-width=".8" opacity=".35"/>
</g></g>
</svg>

<!-- details pane -->
<div class="a" style="left:279px;top:261px;width:17px;height:25px;background:linear-gradient(90deg,#5a9c98,#90c8c0 35%,#4a8a88);clip-path:polygon(0 6%,75% 0,100% 14%,100% 100%,20% 94%,0 88%)"></div>
<div class="a" style="left:282px;top:266px;width:12px;height:15px;background:linear-gradient(160deg,#d0f0f8 0,#80c0e0 35%,#3a80a8 60%,#204a40 100%);clip-path:polygon(0 0,100% 10%,100% 100%,0 92%)"></div>
<div class="a" style="left:306px;top:275.5px;width:6px;height:5px;border:1px solid #6a7888"></div>
<div class="a" style="left:308.5px;top:280px;width:1px;height:2px;background:#6a7888"></div>
<div class="t" style="left:314px;top:276px;color:#1e395b;font-size:5.2px">View as a slide show</div>
<div class="a" style="left:367px;top:275px;width:6px;height:6px;border-radius:50%;background:radial-gradient(circle at 40% 40%,#6ac0f0,#1a70c0)"></div>
<div class="t" style="left:375px;top:276px;color:#1e395b;font-size:5.2px">Order prints online</div>
<div class="a" style="left:426px;top:275px;width:6px;height:6px;background:linear-gradient(180deg,#c8d0d8,#7a8898);border-radius:1px"></div>
<div class="t" style="left:434px;top:276px;color:#1e395b;font-size:5.2px">Print pictures</div>

<!-- clock -->
<svg class="a" style="left:566px;top:3px" width="60" height="60" viewBox="0 0 60 60">
 <defs>
  <linearGradient id="cf" x1="0" y1="0" x2="1" y2="1"><stop offset="0" stop-color="#f4f5f6"/><stop offset=".5" stop-color="#e6e8ea"/><stop offset="1" stop-color="#d8dadd"/></linearGradient>
  <linearGradient id="cr" x1="0" y1="0" x2="1" y2="1"><stop offset="0" stop-color="#ffffff"/><stop offset=".45" stop-color="#c4c8cc"/><stop offset=".7" stop-color="#8a9098"/><stop offset="1" stop-color="#e8eaec"/></linearGradient>
 </defs>
 <circle cx="30" cy="30.2" r="27.3" fill="url(#cr)" stroke="#6a7a88" stroke-width=".5"/>
 <circle cx="30" cy="30.2" r="25.3" fill="url(#cf)" stroke="#a8b0b8" stroke-width=".6"/>
 <path d="M7 27 A23.5 23.5 0 0 1 50 17 Q30 30 9 40 Z" fill="rgba(255,255,255,.35)"/>
 <g stroke="#4a5058" stroke-width=".65"><line x1="30.00" y1="10.20" x2="30.00" y2="7.20"/><line x1="40.25" y1="12.45" x2="41.50" y2="10.28"/><line x1="47.75" y1="19.95" x2="49.92" y2="18.70"/><line x1="50.00" y1="30.20" x2="53.00" y2="30.20"/><line x1="47.75" y1="40.45" x2="49.92" y2="41.70"/><line x1="40.25" y1="47.95" x2="41.50" y2="50.12"/><line x1="30.00" y1="50.20" x2="30.00" y2="53.20"/><line x1="19.75" y1="47.95" x2="18.50" y2="50.12"/><line x1="12.25" y1="40.45" x2="10.08" y2="41.70"/><line x1="10.00" y1="30.20" x2="7.00" y2="30.20"/><line x1="12.25" y1="19.95" x2="10.08" y2="18.70"/><line x1="19.75" y1="12.45" x2="18.50" y2="10.28"/></g>
 <line x1="26.6" y1="36.4" x2="40.5" y2="11.6" stroke="#2a3038" stroke-width="1" stroke-dasharray="1.5 .8"/>
 <path d="M15.3 37.4 L48.6 19.2 L48.8 19.7 L16 38.6 Z" fill="#c04858"/>
 <circle cx="30" cy="30.2" r="1" fill="#2a3038"/>
</svg>

<!-- calendar -->
<div class="a" style="left:562px;top:78px;width:55px;height:56px;background:linear-gradient(180deg,#f4f5f6,#e8eaec 60%,#dcdfe2);border-radius:2px 2px 0 0;box-shadow:0 0 1px rgba(0,0,0,.5)"></div>
<div class="a" style="left:570px;top:88px;width:1px;height:43px;background:#c4c8cc"></div>
<div class="a" style="left:585px;top:88px;width:1px;height:43px;background:#c4c8cc"></div>
<div class="a" style="left:600px;top:88px;width:1px;height:43px;background:#c4c8cc"></div>
<div class="a" style="left:567px;top:81px;width:0;height:0;border-top:2.2px solid transparent;border-bottom:2.2px solid transparent;border-right:3px solid #5a6068"></div>
<div class="t" style="left:582px;top:80px;color:#2a2e34;font-size:6px">Oct 08</div>
<div class="a" style="left:609.5px;top:81px;width:0;height:0;border-top:2.2px solid transparent;border-bottom:2.2px solid transparent;border-left:3px solid #5a6068"></div>
<div class="a" style="left:562.5px;top:88.5px;width:55px;height:40px;font-size:5.2px;line-height:5.8px;color:#1a1e24;font-family:'Liberation Sans',sans-serif">
 <div style="display:grid;grid-template-columns:repeat(7,7.75px);grid-auto-rows:5.85px;text-align:center">
  <span style="color:#8a9098">M</span><span style="color:#8a9098">T</span><span style="color:#8a9098">W</span><span style="color:#8a9098">T</span><span style="color:#e07818">F</span><span style="color:#8a9098">S</span><span style="color:#8a9098">S</span>
  <span></span><span></span><span>1</span><span>2</span><span>3</span><span>4</span><span>5</span>
  <span>6</span><span>7</span><span>8</span><span>9</span><span>10</span><span>11</span><span>12</span>
  <span>13</span><span>14</span><span>15</span><span>16</span><span>17</span><span>18</span><span>19</span>
  <span>20</span><span>21</span><span>22</span><span>23</span><span>24</span><span>25</span><span>26</span>
  <span>27</span><span>28</span><span>29</span><span>30</span><span style="background:#e87818;color:#fff">31</span><span></span><span></span>
 </div>
</div>
<div class="a" style="left:562px;top:130.5px;width:55px;height:1.5px;background:repeating-linear-gradient(90deg,#a0a4a8 0,#a0a4a8 3px,#e8eaec 3px,#e8eaec 4.7px)"></div>
<div class="a" style="left:562px;top:134px;width:55px;height:57px;background:linear-gradient(180deg,#f47214,#e05c08 50%,#cc5000);border-radius:0 0 2px 2px;box-shadow:0 0 1px rgba(0,0,0,.5)"></div>
<div class="a" style="left:563px;top:132px;width:53px;height:4px;background:repeating-linear-gradient(90deg,#101010 0,#101010 1.6px,#f4f4f4 1.6px,#f4f4f4 3px,#606060 3px,#606060 4.7px)"></div>
<div class="t" style="left:571px;top:141px;color:#fde8d8;font-size:6px;font-weight:bold">October 2008</div>
<div class="t" style="left:573px;top:149px;color:#fff;font-size:30px;line-height:30px">31</div>
<div class="t" style="left:581px;top:182px;color:#fde8d8;font-size:6px;font-weight:bold">Friday</div>

<!-- media center -->
<div class="a" style="left:563px;top:204px;width:56px;height:56px;background:linear-gradient(165deg,#4080bc,#2c66aa 45%,#1c4e94);border:1px solid #a8c4e4;box-shadow:0 0 0 1px rgba(10,40,90,.5)"></div>
<div class="t" style="left:567px;top:221px;color:#fff;font-size:5px">Play Music</div>
<div class="t" style="left:567px;top:226px;color:#fff;font-size:5px">Play Slide show</div>
<div class="t" style="left:567px;top:231px;color:#fff;font-size:5px">Play Video+Picture</div>
<div class="t" style="left:583px;top:244px;color:#fff;font-size:5.5px">Windows</div>
<div class="t" style="left:572px;top:250.5px;color:#fff;font-size:5.5px">Media Center</div>
<div class="a" style="left:606px;top:245px;width:9px;height:9px;border-radius:50%;background:radial-gradient(circle at 50% 50%,#f8d030 0,#f0a020 25%,#58b040 45%,#1a5a20 75%,#a0d080 100%)"></div>

<!-- ============ start menu ============ -->
<div class="a" style="left:1px;top:148px;width:183px;height:238px;border:1px solid #08304a;border-radius:3px 3px 0 0;background:linear-gradient(180deg,#0e5a80 0,#0b4c72 30px,#083b61 60px,#062e52 95px,#06284a 140px,#07223f 238px)"></div>
<div class="a" style="left:115px;top:149px;width:68px;height:120px;background:linear-gradient(200deg,rgba(50,140,180,.55) 0,rgba(40,125,165,.35) 28px,rgba(20,80,120,0) 60px)"></div>
<div class="a" style="left:1px;top:152px;width:4px;height:231px;background:linear-gradient(90deg,#2a4a5a,#0a2a40)"></div>
<div class="a" style="left:4px;top:152px;width:111px;height:231px;background:linear-gradient(180deg,#fff 0,#fff 208px,#f2f4f6 212px,#eef0f3 231px);border:1px solid #5a7a90;border-radius:2px"></div>
<div class="a" style="left:9px;top:210px;width:100px;height:0"></div>
<!-- user pic -->
<div class="a" style="left:136px;top:138px;width:24px;height:24px;border:1px solid #c0d8e4;border-radius:2px;box-shadow:0 0 0 1px rgba(0,30,50,.5);background:
 radial-gradient(circle at 50% 56%,#d8b030 0,#c89828 14%,rgba(200,120,20,0) 22%),
 repeating-conic-gradient(from 0deg at 50% 56%,#f07a20 0deg 9deg,#d85010 9deg 18deg),
 #f07020"></div>
<div class="a" style="left:137px;top:139px;width:22px;height:12px;background:linear-gradient(180deg,rgba(255,230,210,.6),rgba(255,200,170,.25))"></div>
<!-- left items -->
<svg class="a" style="left:6.5px;top:154.5px" width="15" height="15" viewBox="0 0 15 15">
 <circle cx="7.5" cy="7.5" r="7" fill="#e86818"/>
 <circle cx="8.3" cy="6.6" r="4.4" fill="#2a5098"/>
 <path d="M1 6 Q2 1.5 7 1 Q4 3 4.5 6 Q5 10 9 11 Q12 11 13.5 9 Q12.5 13.5 7.5 14 Q1.5 13.5 1 6Z" fill="#f08828"/>
 <path d="M10 1.5 Q13 3 13.8 6 Q12 4 10 3.5Z" fill="#f8b040"/>
</svg>
<div class="sl" style="top:156px;font-weight:bold">Internet</div>
<div class="sl" style="top:163px">Firefox</div>
<svg class="a" style="left:7px;top:172.5px" width="14" height="14" viewBox="0 0 14 14">
 <rect x="2" y="3" width="11" height="10.5" rx="1" fill="#c8d8f0" stroke="#6a88b8" stroke-width=".7"/>
 <rect x="3" y="4" width="9" height="8.5" fill="#e8f0fa"/>
 <path d="M4 5 L11 12 L9 12.5 L3.5 7Z" fill="#1a2a48"/>
 <circle cx="3.5" cy="2.8" r="2.3" fill="#f0c838"/>
</svg>
<div class="sl" style="top:177px;font-weight:bold">IconWorkshop</div>
<svg class="a" style="left:7px;top:190.5px" width="15" height="15" viewBox="0 0 15 15">
 <path d="M3 2 L14 1 L12.5 5 L1.5 6Z" fill="#b8d0e8" stroke="#8aa0b8" stroke-width=".5"/>
 <path d="M1.5 6 L12.5 5 L11 14 L0.5 14.5Z" fill="#e0e6ee" stroke="#a0acb8" stroke-width=".5"/>
 <g fill="#a8b4c4"><rect x="2" y="7" width="2" height="1.5"/><rect x="5" y="7" width="2" height="1.5"/><rect x="8" y="6.8" width="2" height="1.5"/><rect x="1.8" y="10" width="2" height="1.5"/><rect x="4.8" y="10" width="2" height="1.5"/><rect x="7.8" y="9.8" width="2" height="1.5"/></g>
</svg>
<div class="sl" style="top:195.5px;color:#5a5a5a">Calculator</div>
<svg class="a" style="left:7px;top:208.5px" width="14" height="14" viewBox="0 0 14 14">
 <rect x="4" y="6" width="9.5" height="7.5" fill="#5a80c0" stroke="#3a5a98" stroke-width=".5"/>
 <rect x="5" y="7.5" width="7.5" height="5" fill="#e8eef8"/>
 <circle cx="5.5" cy="5.5" r="5" fill="#e85828"/>
 <circle cx="5" cy="5" r="3.2" fill="#f8c838"/>
 <path d="M2 3 Q5 1 9 3" stroke="#60b040" stroke-width="1.2" fill="none"/>
</svg>
<div class="sl" style="top:213px;color:#333">WindowBlinds</div>
<svg class="a" style="left:7px;top:227px" width="14" height="14" viewBox="0 0 14 14">
 <circle cx="9.5" cy="3.6" r="2.6" fill="#58b848"/><path d="M5.5 13 Q5.5 6.5 9.5 6.5 Q13.5 6.5 13.5 13Z" fill="#48a838"/>
 <circle cx="4.8" cy="4.2" r="2.8" fill="#4a90e0"/><path d="M0.3 13.5 Q0.3 7.2 4.8 7.2 Q9.3 7.2 9.3 13.5Z" fill="#2a70c8"/>
</svg>
<div class="sl" style="top:231px;color:#333">Messenger</div>
<svg class="a" style="left:7px;top:244px" width="14" height="15" viewBox="0 0 14 15">
 <path d="M3 6 L11 6 L10.5 14 L3.5 14Z" fill="#e8ecf0" stroke="#8a98a8" stroke-width=".5"/>
 <path d="M4.5 1 L7.5 10" stroke="#d83030" stroke-width="1.3"/>
 <path d="M10.5 1.5 L7.5 10" stroke="#b89048" stroke-width="1"/>
</svg>
<div class="sl" style="top:249px;color:#333">Paint</div>
<svg class="a" style="left:7px;top:262px" width="14" height="14" viewBox="0 0 14 14">
 <circle cx="7" cy="7.3" r="5" fill="#2a88e0"/><circle cx="7" cy="7.3" r="2.6" fill="#fff"/>
 <rect x="4" y="6.6" width="6.5" height="1.4" fill="#2a88e0"/><rect x="8.5" y="8" width="4" height="2.5" fill="#fff"/>
 <ellipse cx="7" cy="7" rx="7" ry="3" fill="none" stroke="#f0b828" stroke-width="1" transform="rotate(-35 7 7)"/>
</svg>
<div class="sl" style="top:266.5px;color:#333">Internet Explorer</div>
<svg class="a" style="left:7px;top:279.5px" width="14" height="14" viewBox="0 0 14 14">
 <rect x=".5" y=".5" width="13" height="13" rx="2" fill="#c8d4e0" stroke="#7a8898" stroke-width=".6"/>
 <rect x="1.5" y="1.5" width="11" height="6" rx="1.5" fill="#e8eef4"/>
 <path d="M4 2.5 Q7 7 4 11.5 M10 2.5 Q7 7 10 11.5" stroke="#1a3a68" stroke-width="1.3" fill="none"/>
</svg>
<div class="sl" style="top:284px;color:#333">KMPlayer</div>
<svg class="a" style="left:7px;top:297.5px" width="14" height="14" viewBox="0 0 14 14">
 <rect x="3" y="1" width="10" height="12.5" fill="#f4f8fc" stroke="#7a98c0" stroke-width=".6"/>
 <g stroke="#5a80b8" stroke-width=".7"><line x1="8" y1="4" x2="12" y2="4"/><line x1="8" y1="6" x2="12" y2="6"/><line x1="5" y1="9" x2="12" y2="9"/><line x1="5" y1="11" x2="12" y2="11"/></g>
 <rect x=".8" y="2.5" width="6" height="5.5" fill="#2a5ab0"/>
 <text x="1.6" y="7" font-size="4.5" fill="#fff" font-family="Liberation Sans" font-weight="bold">W</text>
</svg>
<div class="sl" style="top:301.5px;color:#333">Word 2007</div>
<svg class="a" style="left:7px;top:315.5px" width="14" height="14" viewBox="0 0 14 14">
 <path d="M2 4 L11 1.5 L13 11 L4 13.5Z" fill="#a8d8ec" stroke="#5a98b8" stroke-width=".6"/>
 <path d="M2 4 L11 1.5 L11.5 3.5 L2.5 6Z" fill="#d8f0f8"/>
</svg>
<div class="sl" style="top:320px;color:#333">Notepad</div>
<svg class="a" style="left:7px;top:333px" width="14" height="14" viewBox="0 0 14 14">
 <path d="M1 1 L4.5 1 L4.5 5.5 L9 1 L12.5 1 L7 6.5 L10 9 L7.5 11 L4.5 8 L4.5 13 L1 13Z" fill="#e01818"/>
 <path d="M7 9 L13 12.5 L11 13.5 L6.5 10.5Z" fill="#101010"/>
</svg>
<div class="sl" style="top:337.5px;color:#333">Kaspersky Internet Security 7.0</div>
<div class="a" style="left:8px;top:303px;width:0;height:0"></div>
<div class="a" style="left:9.5px;top:355px;width:0;height:0;border-top:2.2px solid transparent;border-bottom:2.2px solid transparent;border-left:2.8px solid #111"></div>
<div class="sl" style="top:355px;left:22px;font-weight:bold;color:#111">All Programs</div>
<div class="a" style="left:9px;top:368px;width:102px;height:10px;background:#fff;border:1px solid #98a4b0;border-radius:1px"></div>
<div class="t" style="left:11px;top:370.5px;color:#8a929a;font-size:5.4px;font-style:italic">Search programs and files</div>
<svg class="a" style="left:103px;top:369.5px" width="7" height="7" viewBox="0 0 7 7"><circle cx="4.3" cy="2.7" r="1.9" fill="none" stroke="#3a5a7a" stroke-width=".8"/><path d="M3 4 L.8 6.2" stroke="#3a5a7a" stroke-width="1"/></svg>

<!-- right items -->
<div class="sr" style="top:176.5px;font-weight:bold">Documents</div>
<div class="sr" style="top:192.5px;font-weight:bold">Pictures</div>
<div class="sr" style="top:208.5px;font-weight:bold">Music</div>
<div class="a" style="left:119px;top:220px;width:56px;height:14px;border:1px solid rgba(120,145,170,.5);border-radius:2px;background:linear-gradient(180deg,rgba(150,170,190,.5) 0,rgba(110,135,160,.45) 48%,rgba(20,40,65,.45) 52%,rgba(40,65,95,.5) 100%)"></div>
<div class="sr" style="top:224.5px;font-weight:bold">Computer</div>
<div class="sr" style="top:240.5px;font-weight:bold">Network</div>
<div class="a" style="left:119px;top:253px;width:56px;height:1px;background:rgba(120,150,180,.4)"></div>
<div class="sr" style="top:260.5px;color:#e8f0f8">Control Panel</div>
<div class="sr" style="top:277px;color:#e8f0f8">Default Programs</div>
<div class="sr" style="top:293px;color:#e8f0f8">Printers and Faxes</div>
<div class="a" style="left:119px;top:305px;width:56px;height:1px;background:rgba(120,150,180,.35)"></div>
<div class="sr" style="top:312px;color:#e8f0f8">Help and Support</div>
<div class="sr" style="top:328px;font-weight:bold">Search</div>
<div class="sr" style="top:344px;color:#e8f0f8">Run...</div>
<!-- power buttons -->
<div class="a" style="left:118px;top:369px;width:58px;height:11px;border:1px solid rgba(10,20,30,.8);border-radius:2px;background:linear-gradient(180deg,#4a5a6a,#2e3a48 50%,#1e2a36)"></div>
<div class="a" style="left:141px;top:370px;width:1px;height:9px;background:rgba(0,0,0,.6)"></div>
<div class="a" style="left:166px;top:370px;width:1px;height:9px;background:rgba(0,0,0,.6)"></div>
<div class="a" style="left:127px;top:371.5px;width:6px;height:6px;border:1px solid #fff;border-top-color:transparent;border-radius:50%"></div>
<div class="a" style="left:129.5px;top:370.5px;width:1px;height:4px;background:#fff"></div>
<div class="a" style="left:152px;top:374px;width:6px;height:4px;background:#fff"></div>
<div class="a" style="left:153px;top:371px;width:4px;height:4px;border:1px solid #fff;border-bottom:none;border-radius:2px 2px 0 0"></div>
<div class="a" style="left:170px;top:373px;width:0;height:0;border-top:1.5px solid transparent;border-bottom:1.5px solid transparent;border-left:2px solid #fff"></div>

<!-- thumbnail preview -->
<div class="a" style="left:193px;top:355px;width:37px;height:28px;background:#0a2048"></div>
<div class="a" style="left:193px;top:370px;width:37px;height:13px;background:linear-gradient(180deg,#8a9298,#5a6268 30%,#30363e 70%,#1a2028)"></div>
<div class="a" style="left:196px;top:365px;width:20px;height:20px;border-radius:50%;background:radial-gradient(circle,#60d0f0 0,#30a8e0 35%,rgba(30,140,200,.7) 55%,rgba(20,100,160,0) 72%)"></div>
<div class="a" style="left:202px;top:371px;width:8px;height:8px;border-radius:50%;background:conic-gradient(from -90deg,#f06828 0 25%,#78c838 25% 50%,#f8c828 50% 75%,#2a90e0 75% 100%)"></div>
<div class="a" style="left:222px;top:371px;width:7px;height:8px;background:#3aa848;border:1px solid #c0ecb0"></div>

<!-- notification popup & watermark -->
<div class="a" style="left:562px;top:362px;width:46px;height:12px;background:linear-gradient(180deg,#4a525c,#262c34 50%,#14181e);border:1px solid #0a0e14;border-radius:1px"></div>
<div class="a" style="left:601px;top:362px;width:1px;height:12px;background:#3a424a"></div>
<div class="t" style="left:568px;top:365px;color:#e0e0e0;font-size:4px">▲</div>
<div class="a" style="left:575px;top:364px;width:6px;height:8px;background:radial-gradient(circle at 50% 30%,#60c040 0,#60c040 30%,rgba(0,0,0,0) 35%),radial-gradient(circle at 60% 75%,#e03020 0,#e03020 30%,rgba(0,0,0,0) 35%)"></div>
<div class="t" style="left:585px;top:365px;color:#e8e8e8;font-size:5.2px">20:08</div>
<div class="t" style="left:611px;top:371.5px;color:#fff;font-size:5.2px">Windows 7</div>
<div class="t" style="left:551px;top:378px;color:#fff;font-size:5.2px">For testing purposes only. Build 6801</div>

<!-- taskbar -->
<div class="a" style="left:0;top:386px;width:640px;height:14px;background:linear-gradient(180deg,#6a7888 0,#b4c0d0 1px,#a8b0bc 3px,#7c848e 5px,#444c56 7px,#242a34 9px,#161b24 14px)"></div>
<div class="a" style="left:70px;top:386px;width:67px;height:14px;border:1px solid rgba(0,0,0,.45);border-radius:2px;background:linear-gradient(180deg,rgba(255,255,255,.18),rgba(255,255,255,.02))"></div>
<div class="a" style="left:139px;top:386px;width:71px;height:14px;border:1px solid rgba(0,0,0,.45);border-radius:2px;background:linear-gradient(180deg,rgba(255,255,255,.18),rgba(255,255,255,.02))"></div>
<svg class="a" style="left:3px;top:384px" width="19" height="16" viewBox="0 0 19 16">
 <defs><radialGradient id="ob" cx=".5" cy=".4" r=".6"><stop offset="0" stop-color="#3a6a90"/><stop offset=".7" stop-color="#1a3658"/><stop offset="1" stop-color="#0e1e30"/></radialGradient></defs>
 <circle cx="9.5" cy="9" r="8.8" fill="url(#ob)" stroke="#5a7890" stroke-width=".5"/>
 <path d="M4.5 5.5 Q6.5 4.6 9 5.4 L8.6 8.6 Q6.2 7.9 4.1 8.7Z" fill="#f05a20"/>
 <path d="M9.8 5.6 Q12.2 6.4 14.6 5.6 L14.2 8.9 Q11.9 9.6 9.4 8.8Z" fill="#78c030"/>
 <path d="M4 9.5 Q6.1 8.7 8.5 9.4 L8.1 12.6 Q5.7 11.9 3.6 12.7Z" fill="#2a90e0"/>
 <path d="M9.3 9.6 Q11.8 10.4 14.1 9.7 L13.7 12.9 Q11.3 13.6 8.9 12.8Z" fill="#f8c020"/>
 <ellipse cx="9.5" cy="5" rx="6" ry="3.2" fill="rgba(255,255,255,.18)"/>
</svg>
<div class="a" style="left:29px;top:390px;width:7px;height:7px;background:#40a848;border:1px solid #c0e8b0"></div>
<div class="a" style="left:40px;top:390px;width:7px;height:7px;background:linear-gradient(135deg,#f8c040,#e08020);border:1px solid #f0e0a0"></div>
<div class="a" style="left:51px;top:389.5px;width:7px;height:8px;border-radius:50%;border:2px solid #3a90e0;border-left-color:#f0c030"></div>
<div class="t" style="left:62px;top:387px;color:#d0d4d8;font-size:4.5px">»</div>
<div class="a" style="left:73px;top:389px;width:8px;height:8px;border-radius:50%;background:radial-gradient(circle at 55% 40%,#3a6ab8 0,#3a6ab8 30%,#e87820 45%,#c04010 100%)"></div>
<div class="t" style="left:83px;top:390.5px;color:#f0f0f0;font-size:5.2px">deviantART : Subm...</div>
<div class="a" style="left:143px;top:389px;width:5px;height:8px;background:linear-gradient(90deg,#d8b040,#f8e498 50%,#d8b040);border-radius:1px"></div>
<div class="t" style="left:151px;top:390.5px;color:#f0f0f0;font-size:5.2px">Windows Seven</div>
<div class="t" style="left:602px;top:390px;color:#e0e0e0;font-size:4px">▲</div>
<div class="a" style="left:608px;top:389px;width:6px;height:8px;background:radial-gradient(circle at 50% 30%,#60c040 0,#60c040 30%,rgba(0,0,0,0) 35%),radial-gradient(circle at 60% 75%,#e03020 0,#e03020 30%,rgba(0,0,0,0) 35%)"></div>
<div class="t" style="left:618px;top:390.5px;color:#f0f0f0;font-size:5.2px">20:08</div>
<div class="a" style="left:635px;top:386px;width:1px;height:14px;background:rgba(0,0,0,.5);border-right:1px solid rgba(255,255,255,.15)"></div>


</body></html>
